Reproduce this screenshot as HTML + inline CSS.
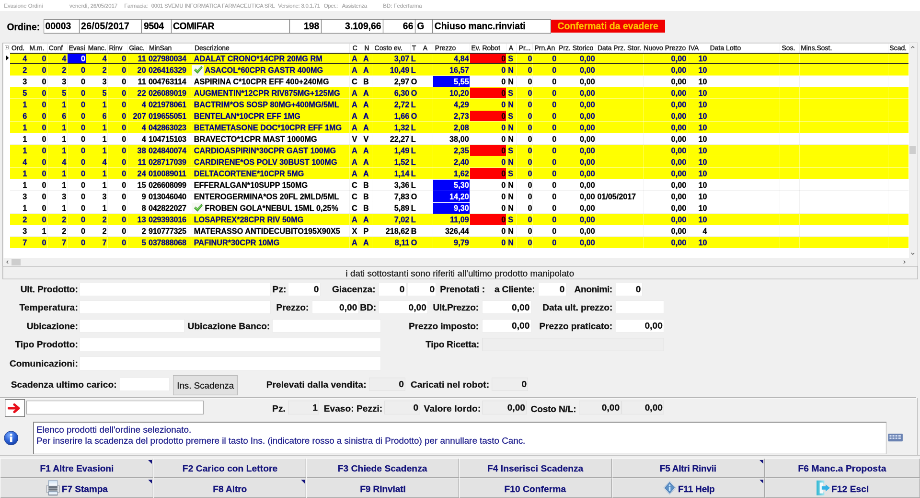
<!DOCTYPE html>
<html lang="it"><head><meta charset="utf-8"><title>Evasione Ordini</title>
<style>
html,body{margin:0;padding:0;width:920px;height:498px;overflow:hidden;background:#f0f0f0;}
#w{position:absolute;left:0;top:0;width:1920px;height:1040px;transform-origin:0 0;transform:scale(0.479167,0.479167);
 font-family:"Liberation Sans",sans-serif;background:#f0f0f0;overflow:hidden;will-change:transform;}
.b{position:absolute;display:block;box-sizing:border-box;}
.t{position:absolute;white-space:nowrap;display:block;-webkit-text-stroke:0.3px;}
</style></head><body><div id="w">
<div class="b " style="left:0.00px;top:0.00px;width:1920.00px;height:22.96px;background:#ffffff;"></div>
<span class="t" style="top:4.82px;height:14.79px;line-height:14.79px;font-size:11.37px;color:#a4a4a4;letter-spacing:0.07px;left:8.35px;-webkit-text-stroke:0.35px #b4b4b4;">Evasione Ordini</span>
<span class="t" style="top:4.82px;height:14.79px;line-height:14.79px;font-size:11.37px;color:#a4a4a4;letter-spacing:-0.05px;left:145.04px;-webkit-text-stroke:0.35px #b4b4b4;">venerdì, 26/05/2017</span>
<span class="t" style="top:4.82px;height:14.79px;line-height:14.79px;font-size:11.37px;color:#a4a4a4;letter-spacing:-0.17px;left:259.30px;-webkit-text-stroke:0.35px #b4b4b4;">Farmacia:</span>
<span class="t" style="top:4.82px;height:14.79px;line-height:14.79px;font-size:11.37px;color:#a4a4a4;letter-spacing:-0.20px;left:315.65px;-webkit-text-stroke:0.35px #b4b4b4;">0001 SVEMU INFORMATICA FARMACEUTICA SRL</span>
<span class="t" style="top:4.82px;height:14.79px;line-height:14.79px;font-size:11.37px;color:#a4a4a4;letter-spacing:-0.22px;left:580.17px;-webkit-text-stroke:0.35px #b4b4b4;">Versione: 3.0.1.71</span>
<span class="t" style="top:4.82px;height:14.79px;line-height:14.79px;font-size:11.37px;color:#a4a4a4;letter-spacing:-0.29px;left:675.65px;-webkit-text-stroke:0.35px #b4b4b4;">Oper.:</span>
<span class="t" style="top:4.82px;height:14.79px;line-height:14.79px;font-size:11.37px;color:#a4a4a4;letter-spacing:-0.28px;left:713.74px;-webkit-text-stroke:0.35px #b4b4b4;">Assistenza</span>
<span class="t" style="top:4.82px;height:14.79px;line-height:14.79px;font-size:11.37px;color:#a4a4a4;letter-spacing:0.03px;left:799.30px;-webkit-text-stroke:0.35px #b4b4b4;">BD: Federfarma</span>
<span class="t" style="top:43.84px;height:25.23px;line-height:25.23px;font-size:19.41px;color:#000;font-weight:bold;letter-spacing:-0.05px;left:14.40px;">Ordine:</span>
<div class="b " style="left:90.78px;top:40.49px;width:75.13px;height:29.63px;background:#fff;box-shadow:inset 0 0 0 1.2px #7f7f7f;"></div>
<div class="b " style="left:164.87px;top:40.49px;width:130.96px;height:29.63px;background:#fff;box-shadow:inset 0 0 0 1.2px #7f7f7f;"></div>
<div class="b " style="left:294.78px;top:40.49px;width:63.65px;height:29.63px;background:#fff;box-shadow:inset 0 0 0 1.2px #7f7f7f;"></div>
<div class="b " style="left:357.39px;top:40.49px;width:247.30px;height:29.63px;background:#fff;box-shadow:inset 0 0 0 1.2px #7f7f7f;"></div>
<div class="b " style="left:603.65px;top:40.49px;width:67.83px;height:29.63px;background:#fff;box-shadow:inset 0 0 0 1.2px #7f7f7f;"></div>
<div class="b " style="left:670.43px;top:40.49px;width:129.91px;height:29.63px;background:#fff;box-shadow:inset 0 0 0 1.2px #7f7f7f;"></div>
<div class="b " style="left:799.30px;top:40.49px;width:67.83px;height:29.63px;background:#fff;box-shadow:inset 0 0 0 1.2px #7f7f7f;"></div>
<div class="b " style="left:866.09px;top:40.49px;width:36.52px;height:29.63px;background:#fff;box-shadow:inset 0 0 0 1.2px #7f7f7f;"></div>
<div class="b " style="left:901.57px;top:40.49px;width:248.35px;height:29.63px;background:#fff;box-shadow:inset 0 0 0 1.2px #7f7f7f;"></div>
<span class="t" style="top:41.65px;height:25.23px;line-height:25.23px;font-size:19.41px;color:#000;font-weight:bold;letter-spacing:-0.05px;left:94.43px;">00003</span>
<span class="t" style="top:41.65px;height:25.23px;line-height:25.23px;font-size:19.41px;color:#000;font-weight:bold;letter-spacing:0.41px;left:169.04px;">26/05/2017</span>
<span class="t" style="top:41.65px;height:25.23px;line-height:25.23px;font-size:19.41px;color:#000;font-weight:bold;letter-spacing:-0.36px;left:300.00px;">9504</span>
<span class="t" style="top:41.65px;height:25.23px;line-height:25.23px;font-size:19.41px;color:#000;font-weight:bold;letter-spacing:-0.49px;left:361.04px;">COMIFAR</span>
<span class="t" style="top:41.65px;height:25.23px;line-height:25.23px;font-size:19.41px;color:#000;font-weight:bold;right:1253.74px;text-align:right;">198</span>
<span class="t" style="top:41.65px;height:25.23px;line-height:25.23px;font-size:19.41px;color:#000;font-weight:bold;right:1124.35px;text-align:right;">3.109,66</span>
<span class="t" style="top:41.65px;height:25.23px;line-height:25.23px;font-size:19.41px;color:#000;font-weight:bold;right:1057.57px;text-align:right;">66</span>
<span class="t" style="top:41.65px;height:25.23px;line-height:25.23px;font-size:19.41px;color:#000;font-weight:bold;left:870.26px;">G</span>
<span class="t" style="top:41.65px;height:25.23px;line-height:25.23px;font-size:19.41px;color:#000;font-weight:bold;letter-spacing:-0.05px;left:906.78px;">Chiuso manc.rinviati</span>
<div class="b " style="left:1150.43px;top:40.70px;width:237.39px;height:27.34px;background:#f00000;"></div>
<span class="t" style="top:41.75px;height:25.23px;line-height:25.23px;font-size:19.41px;color:#ffc000;font-weight:bold;letter-spacing:0.05px;left:1163.48px;">Confermati da evadere</span>
<div class="b " style="left:5.22px;top:88.70px;width:1910.61px;height:467.27px;background:#fff;box-shadow:inset 0 0 0 1.6px #b4b4b4;"></div>
<div class="b " style="left:20.87px;top:109.77px;width:1875.13px;height:24.00px;background:#ffff00;"></div>
<div class="b " style="left:57.91px;top:109.77px;width:1.04px;height:24.00px;background:rgba(255,255,255,0.4);"></div>
<div class="b " style="left:98.61px;top:109.77px;width:1.04px;height:24.00px;background:rgba(255,255,255,0.4);"></div>
<div class="b " style="left:139.93px;top:109.77px;width:1.04px;height:24.00px;background:rgba(255,255,255,0.4);"></div>
<div class="b " style="left:179.37px;top:109.77px;width:1.04px;height:24.00px;background:rgba(255,255,255,0.4);"></div>
<div class="b " style="left:223.83px;top:109.77px;width:1.04px;height:24.00px;background:rgba(255,255,255,0.4);"></div>
<div class="b " style="left:264.52px;top:109.77px;width:1.04px;height:24.00px;background:rgba(255,255,255,0.4);"></div>
<div class="b " style="left:306.26px;top:109.77px;width:1.04px;height:24.00px;background:rgba(255,255,255,0.4);"></div>
<div class="b " style="left:400.17px;top:109.77px;width:1.04px;height:24.00px;background:rgba(255,255,255,0.4);"></div>
<div class="b " style="left:728.87px;top:109.77px;width:1.04px;height:24.00px;background:rgba(255,255,255,0.4);"></div>
<div class="b " style="left:752.87px;top:109.77px;width:1.04px;height:24.00px;background:rgba(255,255,255,0.4);"></div>
<div class="b " style="left:775.83px;top:109.77px;width:1.04px;height:24.00px;background:rgba(255,255,255,0.4);"></div>
<div class="b " style="left:856.17px;top:109.77px;width:1.04px;height:24.00px;background:rgba(255,255,255,0.4);"></div>
<div class="b " style="left:876.00px;top:109.77px;width:1.04px;height:24.00px;background:rgba(255,255,255,0.4);"></div>
<div class="b " style="left:903.13px;top:109.77px;width:1.04px;height:24.00px;background:rgba(255,255,255,0.4);"></div>
<div class="b " style="left:980.35px;top:109.77px;width:1.04px;height:24.00px;background:rgba(255,255,255,0.4);"></div>
<div class="b " style="left:1056.10px;top:109.77px;width:1.04px;height:24.00px;background:rgba(255,255,255,0.4);"></div>
<div class="b " style="left:1077.39px;top:109.77px;width:1.04px;height:24.00px;background:rgba(255,255,255,0.4);"></div>
<div class="b " style="left:1110.78px;top:109.77px;width:1.04px;height:24.00px;background:rgba(255,255,255,0.4);"></div>
<div class="b " style="left:1161.91px;top:109.77px;width:1.04px;height:24.00px;background:rgba(255,255,255,0.4);"></div>
<div class="b " style="left:1243.30px;top:109.77px;width:1.04px;height:24.00px;background:rgba(255,255,255,0.4);"></div>
<div class="b " style="left:1342.43px;top:109.77px;width:1.04px;height:24.00px;background:rgba(255,255,255,0.4);"></div>
<div class="b " style="left:1435.30px;top:109.77px;width:1.04px;height:24.00px;background:rgba(255,255,255,0.4);"></div>
<div class="b " style="left:1477.04px;top:109.77px;width:1.04px;height:24.00px;background:rgba(255,255,255,0.4);"></div>
<div class="b " style="left:1627.30px;top:109.77px;width:1.04px;height:24.00px;background:rgba(255,255,255,0.4);"></div>
<div class="b " style="left:1667.58px;top:109.77px;width:1.04px;height:24.00px;background:rgba(255,255,255,0.4);"></div>
<div class="b " style="left:1852.70px;top:109.77px;width:1.04px;height:24.00px;background:rgba(255,255,255,0.4);"></div>
<div class="b " style="left:20.87px;top:133.25px;width:1875.13px;height:1.04px;background:rgba(255,255,255,0.45);"></div>
<div class="b " style="left:140.87px;top:111.03px;width:39.03px;height:22.33px;background:#0000fa;"></div>
<div class="b " style="left:981.29px;top:111.03px;width:75.13px;height:22.33px;background:#ff0000;"></div>
<span class="t" style="top:111.92px;height:21.16px;line-height:21.16px;font-size:16.28px;color:#000088;font-weight:bold;right:1863.65px;text-align:right;">4</span>
<span class="t" style="top:111.92px;height:21.16px;line-height:21.16px;font-size:16.28px;color:#000088;font-weight:bold;right:1823.37px;text-align:right;">0</span>
<span class="t" style="top:111.92px;height:21.16px;line-height:21.16px;font-size:16.28px;color:#000088;font-weight:bold;right:1781.84px;text-align:right;">4</span>
<span class="t" style="top:111.92px;height:21.16px;line-height:21.16px;font-size:16.28px;color:#fff;font-weight:bold;right:1741.98px;text-align:right;">0</span>
<span class="t" style="top:111.92px;height:21.16px;line-height:21.16px;font-size:16.28px;color:#000088;font-weight:bold;right:1697.53px;text-align:right;">4</span>
<span class="t" style="top:111.92px;height:21.16px;line-height:21.16px;font-size:16.28px;color:#000088;font-weight:bold;right:1656.63px;text-align:right;">0</span>
<span class="t" style="top:111.92px;height:21.16px;line-height:21.16px;font-size:16.28px;color:#000088;font-weight:bold;right:1615.30px;text-align:right;">11</span>
<span class="t" style="top:111.92px;height:21.16px;line-height:21.16px;font-size:16.28px;color:#000088;font-weight:bold;letter-spacing:-0.29px;left:309.91px;">027980034</span>
<span class="t" style="top:111.92px;height:21.16px;line-height:21.16px;font-size:16.28px;color:#000088;font-weight:bold;left:404.66px;">ADALAT CRONO*14CPR 20MG RM</span>
<span class="t" style="top:111.92px;height:21.16px;line-height:21.16px;font-size:16.28px;color:#000088;font-weight:bold;left:322.43px;width:834.78px;text-align:center;">A</span>
<span class="t" style="top:111.92px;height:21.16px;line-height:21.16px;font-size:16.28px;color:#000088;font-weight:bold;left:346.43px;width:834.78px;text-align:center;">A</span>
<span class="t" style="top:111.92px;height:21.16px;line-height:21.16px;font-size:16.28px;color:#000088;font-weight:bold;right:1065.60px;text-align:right;">3,07</span>
<span class="t" style="top:111.92px;height:21.16px;line-height:21.16px;font-size:16.28px;color:#000088;font-weight:bold;left:857.74px;">L</span>
<span class="t" style="top:111.92px;height:21.16px;line-height:21.16px;font-size:16.28px;color:#000088;font-weight:bold;right:941.22px;text-align:right;">4,84</span>
<span class="t" style="top:111.92px;height:21.16px;line-height:21.16px;font-size:16.28px;color:#200000;font-weight:bold;right:864.83px;text-align:right;">0</span>
<span class="t" style="top:111.92px;height:21.16px;line-height:21.16px;font-size:16.28px;color:#000088;font-weight:bold;left:1060.17px;">S</span>
<span class="t" style="top:111.92px;height:21.16px;line-height:21.16px;font-size:16.28px;color:#000088;font-weight:bold;left:688.70px;width:834.78px;text-align:center;">0</span>
<span class="t" style="top:111.92px;height:21.16px;line-height:21.16px;font-size:16.28px;color:#000088;font-weight:bold;left:739.41px;width:834.78px;text-align:center;">0</span>
<span class="t" style="top:111.92px;height:21.16px;line-height:21.16px;font-size:16.28px;color:#000088;font-weight:bold;right:678.26px;text-align:right;">0,00</span>
<span class="t" style="top:111.92px;height:21.16px;line-height:21.16px;font-size:16.28px;color:#000088;font-weight:bold;right:487.72px;text-align:right;">0,00</span>
<span class="t" style="top:111.92px;height:21.16px;line-height:21.16px;font-size:16.28px;color:#000088;font-weight:bold;right:444.52px;text-align:right;">10</span>
<div class="b " style="left:20.87px;top:133.77px;width:1875.13px;height:24.00px;background:#ffff00;"></div>
<div class="b " style="left:57.91px;top:133.77px;width:1.04px;height:24.00px;background:rgba(255,255,255,0.4);"></div>
<div class="b " style="left:98.61px;top:133.77px;width:1.04px;height:24.00px;background:rgba(255,255,255,0.4);"></div>
<div class="b " style="left:139.93px;top:133.77px;width:1.04px;height:24.00px;background:rgba(255,255,255,0.4);"></div>
<div class="b " style="left:179.37px;top:133.77px;width:1.04px;height:24.00px;background:rgba(255,255,255,0.4);"></div>
<div class="b " style="left:223.83px;top:133.77px;width:1.04px;height:24.00px;background:rgba(255,255,255,0.4);"></div>
<div class="b " style="left:264.52px;top:133.77px;width:1.04px;height:24.00px;background:rgba(255,255,255,0.4);"></div>
<div class="b " style="left:306.26px;top:133.77px;width:1.04px;height:24.00px;background:rgba(255,255,255,0.4);"></div>
<div class="b " style="left:400.17px;top:133.77px;width:1.04px;height:24.00px;background:rgba(255,255,255,0.4);"></div>
<div class="b " style="left:728.87px;top:133.77px;width:1.04px;height:24.00px;background:rgba(255,255,255,0.4);"></div>
<div class="b " style="left:752.87px;top:133.77px;width:1.04px;height:24.00px;background:rgba(255,255,255,0.4);"></div>
<div class="b " style="left:775.83px;top:133.77px;width:1.04px;height:24.00px;background:rgba(255,255,255,0.4);"></div>
<div class="b " style="left:856.17px;top:133.77px;width:1.04px;height:24.00px;background:rgba(255,255,255,0.4);"></div>
<div class="b " style="left:876.00px;top:133.77px;width:1.04px;height:24.00px;background:rgba(255,255,255,0.4);"></div>
<div class="b " style="left:903.13px;top:133.77px;width:1.04px;height:24.00px;background:rgba(255,255,255,0.4);"></div>
<div class="b " style="left:980.35px;top:133.77px;width:1.04px;height:24.00px;background:rgba(255,255,255,0.4);"></div>
<div class="b " style="left:1056.10px;top:133.77px;width:1.04px;height:24.00px;background:rgba(255,255,255,0.4);"></div>
<div class="b " style="left:1077.39px;top:133.77px;width:1.04px;height:24.00px;background:rgba(255,255,255,0.4);"></div>
<div class="b " style="left:1110.78px;top:133.77px;width:1.04px;height:24.00px;background:rgba(255,255,255,0.4);"></div>
<div class="b " style="left:1161.91px;top:133.77px;width:1.04px;height:24.00px;background:rgba(255,255,255,0.4);"></div>
<div class="b " style="left:1243.30px;top:133.77px;width:1.04px;height:24.00px;background:rgba(255,255,255,0.4);"></div>
<div class="b " style="left:1342.43px;top:133.77px;width:1.04px;height:24.00px;background:rgba(255,255,255,0.4);"></div>
<div class="b " style="left:1435.30px;top:133.77px;width:1.04px;height:24.00px;background:rgba(255,255,255,0.4);"></div>
<div class="b " style="left:1477.04px;top:133.77px;width:1.04px;height:24.00px;background:rgba(255,255,255,0.4);"></div>
<div class="b " style="left:1627.30px;top:133.77px;width:1.04px;height:24.00px;background:rgba(255,255,255,0.4);"></div>
<div class="b " style="left:1667.58px;top:133.77px;width:1.04px;height:24.00px;background:rgba(255,255,255,0.4);"></div>
<div class="b " style="left:1852.70px;top:133.77px;width:1.04px;height:24.00px;background:rgba(255,255,255,0.4);"></div>
<div class="b " style="left:20.87px;top:157.25px;width:1875.13px;height:1.04px;background:rgba(255,255,255,0.45);"></div>
<span class="t" style="top:135.92px;height:21.16px;line-height:21.16px;font-size:16.28px;color:#000088;font-weight:bold;right:1863.65px;text-align:right;">2</span>
<span class="t" style="top:135.92px;height:21.16px;line-height:21.16px;font-size:16.28px;color:#000088;font-weight:bold;right:1823.37px;text-align:right;">0</span>
<span class="t" style="top:135.92px;height:21.16px;line-height:21.16px;font-size:16.28px;color:#000088;font-weight:bold;right:1781.84px;text-align:right;">2</span>
<span class="t" style="top:135.92px;height:21.16px;line-height:21.16px;font-size:16.28px;color:#000088;font-weight:bold;right:1741.98px;text-align:right;">0</span>
<span class="t" style="top:135.92px;height:21.16px;line-height:21.16px;font-size:16.28px;color:#000088;font-weight:bold;right:1697.53px;text-align:right;">2</span>
<span class="t" style="top:135.92px;height:21.16px;line-height:21.16px;font-size:16.28px;color:#000088;font-weight:bold;right:1656.63px;text-align:right;">0</span>
<span class="t" style="top:135.92px;height:21.16px;line-height:21.16px;font-size:16.28px;color:#000088;font-weight:bold;right:1615.30px;text-align:right;">20</span>
<span class="t" style="top:135.92px;height:21.16px;line-height:21.16px;font-size:16.28px;color:#000088;font-weight:bold;letter-spacing:-0.29px;left:309.91px;">026416329</span>
<div class="b " style="left:401.11px;top:134.82px;width:23.79px;height:22.75px;background:#f7f9f3;"></div>
<svg class="b" style="left:402.57px;top:137.43px;width:21.29px;height:17.53px" viewBox="0 0 22 20"><path d="M1.5 11 L5 7.5 L9 11.5 L18.5 1.5 L21 4.5 L9.5 18.5 Z" fill="#3fae2a" stroke="#2a7d1c" stroke-width="1"/><path d="M3.5 11 L5 9.5 L9 13.5 L18.5 3.5" fill="none" stroke="#b8ee9a" stroke-width="1.3"/></svg>
<span class="t" style="top:135.92px;height:21.16px;line-height:21.16px;font-size:16.28px;color:#000088;font-weight:bold;left:427.41px;">ASACOL*60CPR GASTR 400MG</span>
<span class="t" style="top:135.92px;height:21.16px;line-height:21.16px;font-size:16.28px;color:#000088;font-weight:bold;left:322.43px;width:834.78px;text-align:center;">A</span>
<span class="t" style="top:135.92px;height:21.16px;line-height:21.16px;font-size:16.28px;color:#000088;font-weight:bold;left:346.43px;width:834.78px;text-align:center;">A</span>
<span class="t" style="top:135.92px;height:21.16px;line-height:21.16px;font-size:16.28px;color:#000088;font-weight:bold;right:1065.60px;text-align:right;">10,49</span>
<span class="t" style="top:135.92px;height:21.16px;line-height:21.16px;font-size:16.28px;color:#000088;font-weight:bold;left:857.74px;">L</span>
<span class="t" style="top:135.92px;height:21.16px;line-height:21.16px;font-size:16.28px;color:#000088;font-weight:bold;right:941.22px;text-align:right;">16,57</span>
<span class="t" style="top:135.92px;height:21.16px;line-height:21.16px;font-size:16.28px;color:#000088;font-weight:bold;right:864.83px;text-align:right;">0</span>
<span class="t" style="top:135.92px;height:21.16px;line-height:21.16px;font-size:16.28px;color:#000088;font-weight:bold;left:1060.17px;">N</span>
<span class="t" style="top:135.92px;height:21.16px;line-height:21.16px;font-size:16.28px;color:#000088;font-weight:bold;left:688.70px;width:834.78px;text-align:center;">0</span>
<span class="t" style="top:135.92px;height:21.16px;line-height:21.16px;font-size:16.28px;color:#000088;font-weight:bold;left:739.41px;width:834.78px;text-align:center;">0</span>
<span class="t" style="top:135.92px;height:21.16px;line-height:21.16px;font-size:16.28px;color:#000088;font-weight:bold;right:678.26px;text-align:right;">0,00</span>
<span class="t" style="top:135.92px;height:21.16px;line-height:21.16px;font-size:16.28px;color:#000088;font-weight:bold;right:487.72px;text-align:right;">0,00</span>
<span class="t" style="top:135.92px;height:21.16px;line-height:21.16px;font-size:16.28px;color:#000088;font-weight:bold;right:444.52px;text-align:right;">10</span>
<div class="b " style="left:57.91px;top:157.77px;width:1.04px;height:24.00px;background:rgba(0,0,0,0.05);"></div>
<div class="b " style="left:98.61px;top:157.77px;width:1.04px;height:24.00px;background:rgba(0,0,0,0.05);"></div>
<div class="b " style="left:139.93px;top:157.77px;width:1.04px;height:24.00px;background:rgba(0,0,0,0.05);"></div>
<div class="b " style="left:179.37px;top:157.77px;width:1.04px;height:24.00px;background:rgba(0,0,0,0.05);"></div>
<div class="b " style="left:223.83px;top:157.77px;width:1.04px;height:24.00px;background:rgba(0,0,0,0.05);"></div>
<div class="b " style="left:264.52px;top:157.77px;width:1.04px;height:24.00px;background:rgba(0,0,0,0.05);"></div>
<div class="b " style="left:306.26px;top:157.77px;width:1.04px;height:24.00px;background:rgba(0,0,0,0.05);"></div>
<div class="b " style="left:400.17px;top:157.77px;width:1.04px;height:24.00px;background:rgba(0,0,0,0.05);"></div>
<div class="b " style="left:728.87px;top:157.77px;width:1.04px;height:24.00px;background:rgba(0,0,0,0.05);"></div>
<div class="b " style="left:752.87px;top:157.77px;width:1.04px;height:24.00px;background:rgba(0,0,0,0.05);"></div>
<div class="b " style="left:775.83px;top:157.77px;width:1.04px;height:24.00px;background:rgba(0,0,0,0.05);"></div>
<div class="b " style="left:856.17px;top:157.77px;width:1.04px;height:24.00px;background:rgba(0,0,0,0.05);"></div>
<div class="b " style="left:876.00px;top:157.77px;width:1.04px;height:24.00px;background:rgba(0,0,0,0.05);"></div>
<div class="b " style="left:903.13px;top:157.77px;width:1.04px;height:24.00px;background:rgba(0,0,0,0.05);"></div>
<div class="b " style="left:980.35px;top:157.77px;width:1.04px;height:24.00px;background:rgba(0,0,0,0.05);"></div>
<div class="b " style="left:1056.10px;top:157.77px;width:1.04px;height:24.00px;background:rgba(0,0,0,0.05);"></div>
<div class="b " style="left:1077.39px;top:157.77px;width:1.04px;height:24.00px;background:rgba(0,0,0,0.05);"></div>
<div class="b " style="left:1110.78px;top:157.77px;width:1.04px;height:24.00px;background:rgba(0,0,0,0.05);"></div>
<div class="b " style="left:1161.91px;top:157.77px;width:1.04px;height:24.00px;background:rgba(0,0,0,0.05);"></div>
<div class="b " style="left:1243.30px;top:157.77px;width:1.04px;height:24.00px;background:rgba(0,0,0,0.05);"></div>
<div class="b " style="left:1342.43px;top:157.77px;width:1.04px;height:24.00px;background:rgba(0,0,0,0.05);"></div>
<div class="b " style="left:1435.30px;top:157.77px;width:1.04px;height:24.00px;background:rgba(0,0,0,0.05);"></div>
<div class="b " style="left:1477.04px;top:157.77px;width:1.04px;height:24.00px;background:rgba(0,0,0,0.05);"></div>
<div class="b " style="left:1627.30px;top:157.77px;width:1.04px;height:24.00px;background:rgba(0,0,0,0.05);"></div>
<div class="b " style="left:1667.58px;top:157.77px;width:1.04px;height:24.00px;background:rgba(0,0,0,0.05);"></div>
<div class="b " style="left:1852.70px;top:157.77px;width:1.04px;height:24.00px;background:rgba(0,0,0,0.05);"></div>
<div class="b " style="left:20.87px;top:181.25px;width:1875.13px;height:1.04px;background:rgba(0,0,0,0.05);"></div>
<div class="b " style="left:903.86px;top:159.23px;width:76.59px;height:22.33px;background:#0000fa;"></div>
<span class="t" style="top:159.92px;height:21.16px;line-height:21.16px;font-size:16.28px;color:#000;font-weight:bold;right:1863.65px;text-align:right;">3</span>
<span class="t" style="top:159.92px;height:21.16px;line-height:21.16px;font-size:16.28px;color:#000;font-weight:bold;right:1823.37px;text-align:right;">0</span>
<span class="t" style="top:159.92px;height:21.16px;line-height:21.16px;font-size:16.28px;color:#000;font-weight:bold;right:1781.84px;text-align:right;">3</span>
<span class="t" style="top:159.92px;height:21.16px;line-height:21.16px;font-size:16.28px;color:#000;font-weight:bold;right:1741.98px;text-align:right;">0</span>
<span class="t" style="top:159.92px;height:21.16px;line-height:21.16px;font-size:16.28px;color:#000;font-weight:bold;right:1697.53px;text-align:right;">3</span>
<span class="t" style="top:159.92px;height:21.16px;line-height:21.16px;font-size:16.28px;color:#000;font-weight:bold;right:1656.63px;text-align:right;">0</span>
<span class="t" style="top:159.92px;height:21.16px;line-height:21.16px;font-size:16.28px;color:#000;font-weight:bold;right:1615.30px;text-align:right;">11</span>
<span class="t" style="top:159.92px;height:21.16px;line-height:21.16px;font-size:16.28px;color:#000;font-weight:bold;letter-spacing:-0.19px;left:309.91px;">004763114</span>
<span class="t" style="top:159.92px;height:21.16px;line-height:21.16px;font-size:16.28px;color:#000;font-weight:bold;left:404.66px;">ASPIRINA C*10CPR EFF 400+240MG</span>
<span class="t" style="top:159.92px;height:21.16px;line-height:21.16px;font-size:16.28px;color:#000;font-weight:bold;left:322.43px;width:834.78px;text-align:center;">C</span>
<span class="t" style="top:159.92px;height:21.16px;line-height:21.16px;font-size:16.28px;color:#000;font-weight:bold;left:346.43px;width:834.78px;text-align:center;">B</span>
<span class="t" style="top:159.92px;height:21.16px;line-height:21.16px;font-size:16.28px;color:#000;font-weight:bold;right:1065.60px;text-align:right;">2,97</span>
<span class="t" style="top:159.92px;height:21.16px;line-height:21.16px;font-size:16.28px;color:#000;font-weight:bold;left:857.74px;">O</span>
<span class="t" style="top:159.92px;height:21.16px;line-height:21.16px;font-size:16.28px;color:#fff;font-weight:bold;right:941.22px;text-align:right;">5,55</span>
<span class="t" style="top:159.92px;height:21.16px;line-height:21.16px;font-size:16.28px;color:#000;font-weight:bold;right:864.83px;text-align:right;">0</span>
<span class="t" style="top:159.92px;height:21.16px;line-height:21.16px;font-size:16.28px;color:#000;font-weight:bold;left:1060.17px;">N</span>
<span class="t" style="top:159.92px;height:21.16px;line-height:21.16px;font-size:16.28px;color:#000;font-weight:bold;left:688.70px;width:834.78px;text-align:center;">0</span>
<span class="t" style="top:159.92px;height:21.16px;line-height:21.16px;font-size:16.28px;color:#000;font-weight:bold;left:739.41px;width:834.78px;text-align:center;">0</span>
<span class="t" style="top:159.92px;height:21.16px;line-height:21.16px;font-size:16.28px;color:#000;font-weight:bold;right:678.26px;text-align:right;">0,00</span>
<span class="t" style="top:159.92px;height:21.16px;line-height:21.16px;font-size:16.28px;color:#000;font-weight:bold;right:487.72px;text-align:right;">0,00</span>
<span class="t" style="top:159.92px;height:21.16px;line-height:21.16px;font-size:16.28px;color:#000;font-weight:bold;right:444.52px;text-align:right;">10</span>
<div class="b " style="left:20.87px;top:181.77px;width:1875.13px;height:24.00px;background:#ffff00;"></div>
<div class="b " style="left:57.91px;top:181.77px;width:1.04px;height:24.00px;background:rgba(255,255,255,0.4);"></div>
<div class="b " style="left:98.61px;top:181.77px;width:1.04px;height:24.00px;background:rgba(255,255,255,0.4);"></div>
<div class="b " style="left:139.93px;top:181.77px;width:1.04px;height:24.00px;background:rgba(255,255,255,0.4);"></div>
<div class="b " style="left:179.37px;top:181.77px;width:1.04px;height:24.00px;background:rgba(255,255,255,0.4);"></div>
<div class="b " style="left:223.83px;top:181.77px;width:1.04px;height:24.00px;background:rgba(255,255,255,0.4);"></div>
<div class="b " style="left:264.52px;top:181.77px;width:1.04px;height:24.00px;background:rgba(255,255,255,0.4);"></div>
<div class="b " style="left:306.26px;top:181.77px;width:1.04px;height:24.00px;background:rgba(255,255,255,0.4);"></div>
<div class="b " style="left:400.17px;top:181.77px;width:1.04px;height:24.00px;background:rgba(255,255,255,0.4);"></div>
<div class="b " style="left:728.87px;top:181.77px;width:1.04px;height:24.00px;background:rgba(255,255,255,0.4);"></div>
<div class="b " style="left:752.87px;top:181.77px;width:1.04px;height:24.00px;background:rgba(255,255,255,0.4);"></div>
<div class="b " style="left:775.83px;top:181.77px;width:1.04px;height:24.00px;background:rgba(255,255,255,0.4);"></div>
<div class="b " style="left:856.17px;top:181.77px;width:1.04px;height:24.00px;background:rgba(255,255,255,0.4);"></div>
<div class="b " style="left:876.00px;top:181.77px;width:1.04px;height:24.00px;background:rgba(255,255,255,0.4);"></div>
<div class="b " style="left:903.13px;top:181.77px;width:1.04px;height:24.00px;background:rgba(255,255,255,0.4);"></div>
<div class="b " style="left:980.35px;top:181.77px;width:1.04px;height:24.00px;background:rgba(255,255,255,0.4);"></div>
<div class="b " style="left:1056.10px;top:181.77px;width:1.04px;height:24.00px;background:rgba(255,255,255,0.4);"></div>
<div class="b " style="left:1077.39px;top:181.77px;width:1.04px;height:24.00px;background:rgba(255,255,255,0.4);"></div>
<div class="b " style="left:1110.78px;top:181.77px;width:1.04px;height:24.00px;background:rgba(255,255,255,0.4);"></div>
<div class="b " style="left:1161.91px;top:181.77px;width:1.04px;height:24.00px;background:rgba(255,255,255,0.4);"></div>
<div class="b " style="left:1243.30px;top:181.77px;width:1.04px;height:24.00px;background:rgba(255,255,255,0.4);"></div>
<div class="b " style="left:1342.43px;top:181.77px;width:1.04px;height:24.00px;background:rgba(255,255,255,0.4);"></div>
<div class="b " style="left:1435.30px;top:181.77px;width:1.04px;height:24.00px;background:rgba(255,255,255,0.4);"></div>
<div class="b " style="left:1477.04px;top:181.77px;width:1.04px;height:24.00px;background:rgba(255,255,255,0.4);"></div>
<div class="b " style="left:1627.30px;top:181.77px;width:1.04px;height:24.00px;background:rgba(255,255,255,0.4);"></div>
<div class="b " style="left:1667.58px;top:181.77px;width:1.04px;height:24.00px;background:rgba(255,255,255,0.4);"></div>
<div class="b " style="left:1852.70px;top:181.77px;width:1.04px;height:24.00px;background:rgba(255,255,255,0.4);"></div>
<div class="b " style="left:20.87px;top:205.25px;width:1875.13px;height:1.04px;background:rgba(255,255,255,0.45);"></div>
<div class="b " style="left:981.29px;top:183.03px;width:75.13px;height:22.33px;background:#ff0000;"></div>
<span class="t" style="top:183.92px;height:21.16px;line-height:21.16px;font-size:16.28px;color:#000088;font-weight:bold;right:1863.65px;text-align:right;">5</span>
<span class="t" style="top:183.92px;height:21.16px;line-height:21.16px;font-size:16.28px;color:#000088;font-weight:bold;right:1823.37px;text-align:right;">0</span>
<span class="t" style="top:183.92px;height:21.16px;line-height:21.16px;font-size:16.28px;color:#000088;font-weight:bold;right:1781.84px;text-align:right;">5</span>
<span class="t" style="top:183.92px;height:21.16px;line-height:21.16px;font-size:16.28px;color:#000088;font-weight:bold;right:1741.98px;text-align:right;">0</span>
<span class="t" style="top:183.92px;height:21.16px;line-height:21.16px;font-size:16.28px;color:#000088;font-weight:bold;right:1697.53px;text-align:right;">5</span>
<span class="t" style="top:183.92px;height:21.16px;line-height:21.16px;font-size:16.28px;color:#000088;font-weight:bold;right:1656.63px;text-align:right;">0</span>
<span class="t" style="top:183.92px;height:21.16px;line-height:21.16px;font-size:16.28px;color:#000088;font-weight:bold;right:1615.30px;text-align:right;">22</span>
<span class="t" style="top:183.92px;height:21.16px;line-height:21.16px;font-size:16.28px;color:#000088;font-weight:bold;letter-spacing:-0.29px;left:309.91px;">026089019</span>
<span class="t" style="top:183.92px;height:21.16px;line-height:21.16px;font-size:16.28px;color:#000088;font-weight:bold;left:404.66px;">AUGMENTIN*12CPR RIV875MG+125MG</span>
<span class="t" style="top:183.92px;height:21.16px;line-height:21.16px;font-size:16.28px;color:#000088;font-weight:bold;left:322.43px;width:834.78px;text-align:center;">A</span>
<span class="t" style="top:183.92px;height:21.16px;line-height:21.16px;font-size:16.28px;color:#000088;font-weight:bold;left:346.43px;width:834.78px;text-align:center;">A</span>
<span class="t" style="top:183.92px;height:21.16px;line-height:21.16px;font-size:16.28px;color:#000088;font-weight:bold;right:1065.60px;text-align:right;">6,30</span>
<span class="t" style="top:183.92px;height:21.16px;line-height:21.16px;font-size:16.28px;color:#000088;font-weight:bold;left:857.74px;">O</span>
<span class="t" style="top:183.92px;height:21.16px;line-height:21.16px;font-size:16.28px;color:#000088;font-weight:bold;right:941.22px;text-align:right;">10,20</span>
<span class="t" style="top:183.92px;height:21.16px;line-height:21.16px;font-size:16.28px;color:#200000;font-weight:bold;right:864.83px;text-align:right;">0</span>
<span class="t" style="top:183.92px;height:21.16px;line-height:21.16px;font-size:16.28px;color:#000088;font-weight:bold;left:1060.17px;">S</span>
<span class="t" style="top:183.92px;height:21.16px;line-height:21.16px;font-size:16.28px;color:#000088;font-weight:bold;left:688.70px;width:834.78px;text-align:center;">0</span>
<span class="t" style="top:183.92px;height:21.16px;line-height:21.16px;font-size:16.28px;color:#000088;font-weight:bold;left:739.41px;width:834.78px;text-align:center;">0</span>
<span class="t" style="top:183.92px;height:21.16px;line-height:21.16px;font-size:16.28px;color:#000088;font-weight:bold;right:678.26px;text-align:right;">0,00</span>
<span class="t" style="top:183.92px;height:21.16px;line-height:21.16px;font-size:16.28px;color:#000088;font-weight:bold;right:487.72px;text-align:right;">0,00</span>
<span class="t" style="top:183.92px;height:21.16px;line-height:21.16px;font-size:16.28px;color:#000088;font-weight:bold;right:444.52px;text-align:right;">10</span>
<div class="b " style="left:20.87px;top:205.77px;width:1875.13px;height:24.00px;background:#ffff00;"></div>
<div class="b " style="left:57.91px;top:205.77px;width:1.04px;height:24.00px;background:rgba(255,255,255,0.4);"></div>
<div class="b " style="left:98.61px;top:205.77px;width:1.04px;height:24.00px;background:rgba(255,255,255,0.4);"></div>
<div class="b " style="left:139.93px;top:205.77px;width:1.04px;height:24.00px;background:rgba(255,255,255,0.4);"></div>
<div class="b " style="left:179.37px;top:205.77px;width:1.04px;height:24.00px;background:rgba(255,255,255,0.4);"></div>
<div class="b " style="left:223.83px;top:205.77px;width:1.04px;height:24.00px;background:rgba(255,255,255,0.4);"></div>
<div class="b " style="left:264.52px;top:205.77px;width:1.04px;height:24.00px;background:rgba(255,255,255,0.4);"></div>
<div class="b " style="left:306.26px;top:205.77px;width:1.04px;height:24.00px;background:rgba(255,255,255,0.4);"></div>
<div class="b " style="left:400.17px;top:205.77px;width:1.04px;height:24.00px;background:rgba(255,255,255,0.4);"></div>
<div class="b " style="left:728.87px;top:205.77px;width:1.04px;height:24.00px;background:rgba(255,255,255,0.4);"></div>
<div class="b " style="left:752.87px;top:205.77px;width:1.04px;height:24.00px;background:rgba(255,255,255,0.4);"></div>
<div class="b " style="left:775.83px;top:205.77px;width:1.04px;height:24.00px;background:rgba(255,255,255,0.4);"></div>
<div class="b " style="left:856.17px;top:205.77px;width:1.04px;height:24.00px;background:rgba(255,255,255,0.4);"></div>
<div class="b " style="left:876.00px;top:205.77px;width:1.04px;height:24.00px;background:rgba(255,255,255,0.4);"></div>
<div class="b " style="left:903.13px;top:205.77px;width:1.04px;height:24.00px;background:rgba(255,255,255,0.4);"></div>
<div class="b " style="left:980.35px;top:205.77px;width:1.04px;height:24.00px;background:rgba(255,255,255,0.4);"></div>
<div class="b " style="left:1056.10px;top:205.77px;width:1.04px;height:24.00px;background:rgba(255,255,255,0.4);"></div>
<div class="b " style="left:1077.39px;top:205.77px;width:1.04px;height:24.00px;background:rgba(255,255,255,0.4);"></div>
<div class="b " style="left:1110.78px;top:205.77px;width:1.04px;height:24.00px;background:rgba(255,255,255,0.4);"></div>
<div class="b " style="left:1161.91px;top:205.77px;width:1.04px;height:24.00px;background:rgba(255,255,255,0.4);"></div>
<div class="b " style="left:1243.30px;top:205.77px;width:1.04px;height:24.00px;background:rgba(255,255,255,0.4);"></div>
<div class="b " style="left:1342.43px;top:205.77px;width:1.04px;height:24.00px;background:rgba(255,255,255,0.4);"></div>
<div class="b " style="left:1435.30px;top:205.77px;width:1.04px;height:24.00px;background:rgba(255,255,255,0.4);"></div>
<div class="b " style="left:1477.04px;top:205.77px;width:1.04px;height:24.00px;background:rgba(255,255,255,0.4);"></div>
<div class="b " style="left:1627.30px;top:205.77px;width:1.04px;height:24.00px;background:rgba(255,255,255,0.4);"></div>
<div class="b " style="left:1667.58px;top:205.77px;width:1.04px;height:24.00px;background:rgba(255,255,255,0.4);"></div>
<div class="b " style="left:1852.70px;top:205.77px;width:1.04px;height:24.00px;background:rgba(255,255,255,0.4);"></div>
<div class="b " style="left:20.87px;top:229.25px;width:1875.13px;height:1.04px;background:rgba(255,255,255,0.45);"></div>
<span class="t" style="top:207.92px;height:21.16px;line-height:21.16px;font-size:16.28px;color:#000088;font-weight:bold;right:1863.65px;text-align:right;">1</span>
<span class="t" style="top:207.92px;height:21.16px;line-height:21.16px;font-size:16.28px;color:#000088;font-weight:bold;right:1823.37px;text-align:right;">0</span>
<span class="t" style="top:207.92px;height:21.16px;line-height:21.16px;font-size:16.28px;color:#000088;font-weight:bold;right:1781.84px;text-align:right;">1</span>
<span class="t" style="top:207.92px;height:21.16px;line-height:21.16px;font-size:16.28px;color:#000088;font-weight:bold;right:1741.98px;text-align:right;">0</span>
<span class="t" style="top:207.92px;height:21.16px;line-height:21.16px;font-size:16.28px;color:#000088;font-weight:bold;right:1697.53px;text-align:right;">1</span>
<span class="t" style="top:207.92px;height:21.16px;line-height:21.16px;font-size:16.28px;color:#000088;font-weight:bold;right:1656.63px;text-align:right;">0</span>
<span class="t" style="top:207.92px;height:21.16px;line-height:21.16px;font-size:16.28px;color:#000088;font-weight:bold;right:1615.30px;text-align:right;">4</span>
<span class="t" style="top:207.92px;height:21.16px;line-height:21.16px;font-size:16.28px;color:#000088;font-weight:bold;letter-spacing:-0.29px;left:309.91px;">021978061</span>
<span class="t" style="top:207.92px;height:21.16px;line-height:21.16px;font-size:16.28px;color:#000088;font-weight:bold;left:404.66px;">BACTRIM*OS SOSP 80MG+400MG/5ML</span>
<span class="t" style="top:207.92px;height:21.16px;line-height:21.16px;font-size:16.28px;color:#000088;font-weight:bold;left:322.43px;width:834.78px;text-align:center;">A</span>
<span class="t" style="top:207.92px;height:21.16px;line-height:21.16px;font-size:16.28px;color:#000088;font-weight:bold;left:346.43px;width:834.78px;text-align:center;">A</span>
<span class="t" style="top:207.92px;height:21.16px;line-height:21.16px;font-size:16.28px;color:#000088;font-weight:bold;right:1065.60px;text-align:right;">2,72</span>
<span class="t" style="top:207.92px;height:21.16px;line-height:21.16px;font-size:16.28px;color:#000088;font-weight:bold;left:857.74px;">L</span>
<span class="t" style="top:207.92px;height:21.16px;line-height:21.16px;font-size:16.28px;color:#000088;font-weight:bold;right:941.22px;text-align:right;">4,29</span>
<span class="t" style="top:207.92px;height:21.16px;line-height:21.16px;font-size:16.28px;color:#000088;font-weight:bold;right:864.83px;text-align:right;">0</span>
<span class="t" style="top:207.92px;height:21.16px;line-height:21.16px;font-size:16.28px;color:#000088;font-weight:bold;left:1060.17px;">N</span>
<span class="t" style="top:207.92px;height:21.16px;line-height:21.16px;font-size:16.28px;color:#000088;font-weight:bold;left:688.70px;width:834.78px;text-align:center;">0</span>
<span class="t" style="top:207.92px;height:21.16px;line-height:21.16px;font-size:16.28px;color:#000088;font-weight:bold;left:739.41px;width:834.78px;text-align:center;">0</span>
<span class="t" style="top:207.92px;height:21.16px;line-height:21.16px;font-size:16.28px;color:#000088;font-weight:bold;right:678.26px;text-align:right;">0,00</span>
<span class="t" style="top:207.92px;height:21.16px;line-height:21.16px;font-size:16.28px;color:#000088;font-weight:bold;right:487.72px;text-align:right;">0,00</span>
<span class="t" style="top:207.92px;height:21.16px;line-height:21.16px;font-size:16.28px;color:#000088;font-weight:bold;right:444.52px;text-align:right;">10</span>
<div class="b " style="left:20.87px;top:229.77px;width:1875.13px;height:24.00px;background:#ffff00;"></div>
<div class="b " style="left:57.91px;top:229.77px;width:1.04px;height:24.00px;background:rgba(255,255,255,0.4);"></div>
<div class="b " style="left:98.61px;top:229.77px;width:1.04px;height:24.00px;background:rgba(255,255,255,0.4);"></div>
<div class="b " style="left:139.93px;top:229.77px;width:1.04px;height:24.00px;background:rgba(255,255,255,0.4);"></div>
<div class="b " style="left:179.37px;top:229.77px;width:1.04px;height:24.00px;background:rgba(255,255,255,0.4);"></div>
<div class="b " style="left:223.83px;top:229.77px;width:1.04px;height:24.00px;background:rgba(255,255,255,0.4);"></div>
<div class="b " style="left:264.52px;top:229.77px;width:1.04px;height:24.00px;background:rgba(255,255,255,0.4);"></div>
<div class="b " style="left:306.26px;top:229.77px;width:1.04px;height:24.00px;background:rgba(255,255,255,0.4);"></div>
<div class="b " style="left:400.17px;top:229.77px;width:1.04px;height:24.00px;background:rgba(255,255,255,0.4);"></div>
<div class="b " style="left:728.87px;top:229.77px;width:1.04px;height:24.00px;background:rgba(255,255,255,0.4);"></div>
<div class="b " style="left:752.87px;top:229.77px;width:1.04px;height:24.00px;background:rgba(255,255,255,0.4);"></div>
<div class="b " style="left:775.83px;top:229.77px;width:1.04px;height:24.00px;background:rgba(255,255,255,0.4);"></div>
<div class="b " style="left:856.17px;top:229.77px;width:1.04px;height:24.00px;background:rgba(255,255,255,0.4);"></div>
<div class="b " style="left:876.00px;top:229.77px;width:1.04px;height:24.00px;background:rgba(255,255,255,0.4);"></div>
<div class="b " style="left:903.13px;top:229.77px;width:1.04px;height:24.00px;background:rgba(255,255,255,0.4);"></div>
<div class="b " style="left:980.35px;top:229.77px;width:1.04px;height:24.00px;background:rgba(255,255,255,0.4);"></div>
<div class="b " style="left:1056.10px;top:229.77px;width:1.04px;height:24.00px;background:rgba(255,255,255,0.4);"></div>
<div class="b " style="left:1077.39px;top:229.77px;width:1.04px;height:24.00px;background:rgba(255,255,255,0.4);"></div>
<div class="b " style="left:1110.78px;top:229.77px;width:1.04px;height:24.00px;background:rgba(255,255,255,0.4);"></div>
<div class="b " style="left:1161.91px;top:229.77px;width:1.04px;height:24.00px;background:rgba(255,255,255,0.4);"></div>
<div class="b " style="left:1243.30px;top:229.77px;width:1.04px;height:24.00px;background:rgba(255,255,255,0.4);"></div>
<div class="b " style="left:1342.43px;top:229.77px;width:1.04px;height:24.00px;background:rgba(255,255,255,0.4);"></div>
<div class="b " style="left:1435.30px;top:229.77px;width:1.04px;height:24.00px;background:rgba(255,255,255,0.4);"></div>
<div class="b " style="left:1477.04px;top:229.77px;width:1.04px;height:24.00px;background:rgba(255,255,255,0.4);"></div>
<div class="b " style="left:1627.30px;top:229.77px;width:1.04px;height:24.00px;background:rgba(255,255,255,0.4);"></div>
<div class="b " style="left:1667.58px;top:229.77px;width:1.04px;height:24.00px;background:rgba(255,255,255,0.4);"></div>
<div class="b " style="left:1852.70px;top:229.77px;width:1.04px;height:24.00px;background:rgba(255,255,255,0.4);"></div>
<div class="b " style="left:20.87px;top:253.25px;width:1875.13px;height:1.04px;background:rgba(255,255,255,0.45);"></div>
<div class="b " style="left:981.29px;top:231.03px;width:75.13px;height:22.33px;background:#ff0000;"></div>
<span class="t" style="top:231.92px;height:21.16px;line-height:21.16px;font-size:16.28px;color:#000088;font-weight:bold;right:1863.65px;text-align:right;">6</span>
<span class="t" style="top:231.92px;height:21.16px;line-height:21.16px;font-size:16.28px;color:#000088;font-weight:bold;right:1823.37px;text-align:right;">0</span>
<span class="t" style="top:231.92px;height:21.16px;line-height:21.16px;font-size:16.28px;color:#000088;font-weight:bold;right:1781.84px;text-align:right;">6</span>
<span class="t" style="top:231.92px;height:21.16px;line-height:21.16px;font-size:16.28px;color:#000088;font-weight:bold;right:1741.98px;text-align:right;">0</span>
<span class="t" style="top:231.92px;height:21.16px;line-height:21.16px;font-size:16.28px;color:#000088;font-weight:bold;right:1697.53px;text-align:right;">6</span>
<span class="t" style="top:231.92px;height:21.16px;line-height:21.16px;font-size:16.28px;color:#000088;font-weight:bold;right:1656.63px;text-align:right;">0</span>
<span class="t" style="top:231.92px;height:21.16px;line-height:21.16px;font-size:16.28px;color:#000088;font-weight:bold;right:1615.30px;text-align:right;">207</span>
<span class="t" style="top:231.92px;height:21.16px;line-height:21.16px;font-size:16.28px;color:#000088;font-weight:bold;letter-spacing:-0.29px;left:309.91px;">019655051</span>
<span class="t" style="top:231.92px;height:21.16px;line-height:21.16px;font-size:16.28px;color:#000088;font-weight:bold;left:404.66px;">BENTELAN*10CPR EFF 1MG</span>
<span class="t" style="top:231.92px;height:21.16px;line-height:21.16px;font-size:16.28px;color:#000088;font-weight:bold;left:322.43px;width:834.78px;text-align:center;">A</span>
<span class="t" style="top:231.92px;height:21.16px;line-height:21.16px;font-size:16.28px;color:#000088;font-weight:bold;left:346.43px;width:834.78px;text-align:center;">A</span>
<span class="t" style="top:231.92px;height:21.16px;line-height:21.16px;font-size:16.28px;color:#000088;font-weight:bold;right:1065.60px;text-align:right;">1,66</span>
<span class="t" style="top:231.92px;height:21.16px;line-height:21.16px;font-size:16.28px;color:#000088;font-weight:bold;left:857.74px;">O</span>
<span class="t" style="top:231.92px;height:21.16px;line-height:21.16px;font-size:16.28px;color:#000088;font-weight:bold;right:941.22px;text-align:right;">2,73</span>
<span class="t" style="top:231.92px;height:21.16px;line-height:21.16px;font-size:16.28px;color:#200000;font-weight:bold;right:864.83px;text-align:right;">0</span>
<span class="t" style="top:231.92px;height:21.16px;line-height:21.16px;font-size:16.28px;color:#000088;font-weight:bold;left:1060.17px;">S</span>
<span class="t" style="top:231.92px;height:21.16px;line-height:21.16px;font-size:16.28px;color:#000088;font-weight:bold;left:688.70px;width:834.78px;text-align:center;">0</span>
<span class="t" style="top:231.92px;height:21.16px;line-height:21.16px;font-size:16.28px;color:#000088;font-weight:bold;left:739.41px;width:834.78px;text-align:center;">0</span>
<span class="t" style="top:231.92px;height:21.16px;line-height:21.16px;font-size:16.28px;color:#000088;font-weight:bold;right:678.26px;text-align:right;">0,00</span>
<span class="t" style="top:231.92px;height:21.16px;line-height:21.16px;font-size:16.28px;color:#000088;font-weight:bold;right:487.72px;text-align:right;">0,00</span>
<span class="t" style="top:231.92px;height:21.16px;line-height:21.16px;font-size:16.28px;color:#000088;font-weight:bold;right:444.52px;text-align:right;">10</span>
<div class="b " style="left:20.87px;top:253.77px;width:1875.13px;height:24.00px;background:#ffff00;"></div>
<div class="b " style="left:57.91px;top:253.77px;width:1.04px;height:24.00px;background:rgba(255,255,255,0.4);"></div>
<div class="b " style="left:98.61px;top:253.77px;width:1.04px;height:24.00px;background:rgba(255,255,255,0.4);"></div>
<div class="b " style="left:139.93px;top:253.77px;width:1.04px;height:24.00px;background:rgba(255,255,255,0.4);"></div>
<div class="b " style="left:179.37px;top:253.77px;width:1.04px;height:24.00px;background:rgba(255,255,255,0.4);"></div>
<div class="b " style="left:223.83px;top:253.77px;width:1.04px;height:24.00px;background:rgba(255,255,255,0.4);"></div>
<div class="b " style="left:264.52px;top:253.77px;width:1.04px;height:24.00px;background:rgba(255,255,255,0.4);"></div>
<div class="b " style="left:306.26px;top:253.77px;width:1.04px;height:24.00px;background:rgba(255,255,255,0.4);"></div>
<div class="b " style="left:400.17px;top:253.77px;width:1.04px;height:24.00px;background:rgba(255,255,255,0.4);"></div>
<div class="b " style="left:728.87px;top:253.77px;width:1.04px;height:24.00px;background:rgba(255,255,255,0.4);"></div>
<div class="b " style="left:752.87px;top:253.77px;width:1.04px;height:24.00px;background:rgba(255,255,255,0.4);"></div>
<div class="b " style="left:775.83px;top:253.77px;width:1.04px;height:24.00px;background:rgba(255,255,255,0.4);"></div>
<div class="b " style="left:856.17px;top:253.77px;width:1.04px;height:24.00px;background:rgba(255,255,255,0.4);"></div>
<div class="b " style="left:876.00px;top:253.77px;width:1.04px;height:24.00px;background:rgba(255,255,255,0.4);"></div>
<div class="b " style="left:903.13px;top:253.77px;width:1.04px;height:24.00px;background:rgba(255,255,255,0.4);"></div>
<div class="b " style="left:980.35px;top:253.77px;width:1.04px;height:24.00px;background:rgba(255,255,255,0.4);"></div>
<div class="b " style="left:1056.10px;top:253.77px;width:1.04px;height:24.00px;background:rgba(255,255,255,0.4);"></div>
<div class="b " style="left:1077.39px;top:253.77px;width:1.04px;height:24.00px;background:rgba(255,255,255,0.4);"></div>
<div class="b " style="left:1110.78px;top:253.77px;width:1.04px;height:24.00px;background:rgba(255,255,255,0.4);"></div>
<div class="b " style="left:1161.91px;top:253.77px;width:1.04px;height:24.00px;background:rgba(255,255,255,0.4);"></div>
<div class="b " style="left:1243.30px;top:253.77px;width:1.04px;height:24.00px;background:rgba(255,255,255,0.4);"></div>
<div class="b " style="left:1342.43px;top:253.77px;width:1.04px;height:24.00px;background:rgba(255,255,255,0.4);"></div>
<div class="b " style="left:1435.30px;top:253.77px;width:1.04px;height:24.00px;background:rgba(255,255,255,0.4);"></div>
<div class="b " style="left:1477.04px;top:253.77px;width:1.04px;height:24.00px;background:rgba(255,255,255,0.4);"></div>
<div class="b " style="left:1627.30px;top:253.77px;width:1.04px;height:24.00px;background:rgba(255,255,255,0.4);"></div>
<div class="b " style="left:1667.58px;top:253.77px;width:1.04px;height:24.00px;background:rgba(255,255,255,0.4);"></div>
<div class="b " style="left:1852.70px;top:253.77px;width:1.04px;height:24.00px;background:rgba(255,255,255,0.4);"></div>
<div class="b " style="left:20.87px;top:277.25px;width:1875.13px;height:1.04px;background:rgba(255,255,255,0.45);"></div>
<span class="t" style="top:255.92px;height:21.16px;line-height:21.16px;font-size:16.28px;color:#000088;font-weight:bold;right:1863.65px;text-align:right;">1</span>
<span class="t" style="top:255.92px;height:21.16px;line-height:21.16px;font-size:16.28px;color:#000088;font-weight:bold;right:1823.37px;text-align:right;">0</span>
<span class="t" style="top:255.92px;height:21.16px;line-height:21.16px;font-size:16.28px;color:#000088;font-weight:bold;right:1781.84px;text-align:right;">1</span>
<span class="t" style="top:255.92px;height:21.16px;line-height:21.16px;font-size:16.28px;color:#000088;font-weight:bold;right:1741.98px;text-align:right;">0</span>
<span class="t" style="top:255.92px;height:21.16px;line-height:21.16px;font-size:16.28px;color:#000088;font-weight:bold;right:1697.53px;text-align:right;">1</span>
<span class="t" style="top:255.92px;height:21.16px;line-height:21.16px;font-size:16.28px;color:#000088;font-weight:bold;right:1656.63px;text-align:right;">0</span>
<span class="t" style="top:255.92px;height:21.16px;line-height:21.16px;font-size:16.28px;color:#000088;font-weight:bold;right:1615.30px;text-align:right;">4</span>
<span class="t" style="top:255.92px;height:21.16px;line-height:21.16px;font-size:16.28px;color:#000088;font-weight:bold;letter-spacing:-0.29px;left:309.91px;">042863023</span>
<span class="t" style="top:255.92px;height:21.16px;line-height:21.16px;font-size:16.28px;color:#000088;font-weight:bold;left:404.66px;">BETAMETASONE DOC*10CPR EFF 1MG</span>
<span class="t" style="top:255.92px;height:21.16px;line-height:21.16px;font-size:16.28px;color:#000088;font-weight:bold;left:322.43px;width:834.78px;text-align:center;">A</span>
<span class="t" style="top:255.92px;height:21.16px;line-height:21.16px;font-size:16.28px;color:#000088;font-weight:bold;left:346.43px;width:834.78px;text-align:center;">A</span>
<span class="t" style="top:255.92px;height:21.16px;line-height:21.16px;font-size:16.28px;color:#000088;font-weight:bold;right:1065.60px;text-align:right;">1,32</span>
<span class="t" style="top:255.92px;height:21.16px;line-height:21.16px;font-size:16.28px;color:#000088;font-weight:bold;left:857.74px;">L</span>
<span class="t" style="top:255.92px;height:21.16px;line-height:21.16px;font-size:16.28px;color:#000088;font-weight:bold;right:941.22px;text-align:right;">2,08</span>
<span class="t" style="top:255.92px;height:21.16px;line-height:21.16px;font-size:16.28px;color:#000088;font-weight:bold;right:864.83px;text-align:right;">0</span>
<span class="t" style="top:255.92px;height:21.16px;line-height:21.16px;font-size:16.28px;color:#000088;font-weight:bold;left:1060.17px;">N</span>
<span class="t" style="top:255.92px;height:21.16px;line-height:21.16px;font-size:16.28px;color:#000088;font-weight:bold;left:688.70px;width:834.78px;text-align:center;">0</span>
<span class="t" style="top:255.92px;height:21.16px;line-height:21.16px;font-size:16.28px;color:#000088;font-weight:bold;left:739.41px;width:834.78px;text-align:center;">0</span>
<span class="t" style="top:255.92px;height:21.16px;line-height:21.16px;font-size:16.28px;color:#000088;font-weight:bold;right:678.26px;text-align:right;">0,00</span>
<span class="t" style="top:255.92px;height:21.16px;line-height:21.16px;font-size:16.28px;color:#000088;font-weight:bold;right:487.72px;text-align:right;">0,00</span>
<span class="t" style="top:255.92px;height:21.16px;line-height:21.16px;font-size:16.28px;color:#000088;font-weight:bold;right:444.52px;text-align:right;">10</span>
<div class="b " style="left:57.91px;top:277.77px;width:1.04px;height:24.00px;background:rgba(0,0,0,0.05);"></div>
<div class="b " style="left:98.61px;top:277.77px;width:1.04px;height:24.00px;background:rgba(0,0,0,0.05);"></div>
<div class="b " style="left:139.93px;top:277.77px;width:1.04px;height:24.00px;background:rgba(0,0,0,0.05);"></div>
<div class="b " style="left:179.37px;top:277.77px;width:1.04px;height:24.00px;background:rgba(0,0,0,0.05);"></div>
<div class="b " style="left:223.83px;top:277.77px;width:1.04px;height:24.00px;background:rgba(0,0,0,0.05);"></div>
<div class="b " style="left:264.52px;top:277.77px;width:1.04px;height:24.00px;background:rgba(0,0,0,0.05);"></div>
<div class="b " style="left:306.26px;top:277.77px;width:1.04px;height:24.00px;background:rgba(0,0,0,0.05);"></div>
<div class="b " style="left:400.17px;top:277.77px;width:1.04px;height:24.00px;background:rgba(0,0,0,0.05);"></div>
<div class="b " style="left:728.87px;top:277.77px;width:1.04px;height:24.00px;background:rgba(0,0,0,0.05);"></div>
<div class="b " style="left:752.87px;top:277.77px;width:1.04px;height:24.00px;background:rgba(0,0,0,0.05);"></div>
<div class="b " style="left:775.83px;top:277.77px;width:1.04px;height:24.00px;background:rgba(0,0,0,0.05);"></div>
<div class="b " style="left:856.17px;top:277.77px;width:1.04px;height:24.00px;background:rgba(0,0,0,0.05);"></div>
<div class="b " style="left:876.00px;top:277.77px;width:1.04px;height:24.00px;background:rgba(0,0,0,0.05);"></div>
<div class="b " style="left:903.13px;top:277.77px;width:1.04px;height:24.00px;background:rgba(0,0,0,0.05);"></div>
<div class="b " style="left:980.35px;top:277.77px;width:1.04px;height:24.00px;background:rgba(0,0,0,0.05);"></div>
<div class="b " style="left:1056.10px;top:277.77px;width:1.04px;height:24.00px;background:rgba(0,0,0,0.05);"></div>
<div class="b " style="left:1077.39px;top:277.77px;width:1.04px;height:24.00px;background:rgba(0,0,0,0.05);"></div>
<div class="b " style="left:1110.78px;top:277.77px;width:1.04px;height:24.00px;background:rgba(0,0,0,0.05);"></div>
<div class="b " style="left:1161.91px;top:277.77px;width:1.04px;height:24.00px;background:rgba(0,0,0,0.05);"></div>
<div class="b " style="left:1243.30px;top:277.77px;width:1.04px;height:24.00px;background:rgba(0,0,0,0.05);"></div>
<div class="b " style="left:1342.43px;top:277.77px;width:1.04px;height:24.00px;background:rgba(0,0,0,0.05);"></div>
<div class="b " style="left:1435.30px;top:277.77px;width:1.04px;height:24.00px;background:rgba(0,0,0,0.05);"></div>
<div class="b " style="left:1477.04px;top:277.77px;width:1.04px;height:24.00px;background:rgba(0,0,0,0.05);"></div>
<div class="b " style="left:1627.30px;top:277.77px;width:1.04px;height:24.00px;background:rgba(0,0,0,0.05);"></div>
<div class="b " style="left:1667.58px;top:277.77px;width:1.04px;height:24.00px;background:rgba(0,0,0,0.05);"></div>
<div class="b " style="left:1852.70px;top:277.77px;width:1.04px;height:24.00px;background:rgba(0,0,0,0.05);"></div>
<div class="b " style="left:20.87px;top:301.25px;width:1875.13px;height:1.04px;background:rgba(0,0,0,0.05);"></div>
<span class="t" style="top:279.92px;height:21.16px;line-height:21.16px;font-size:16.28px;color:#000;font-weight:bold;right:1863.65px;text-align:right;">1</span>
<span class="t" style="top:279.92px;height:21.16px;line-height:21.16px;font-size:16.28px;color:#000;font-weight:bold;right:1823.37px;text-align:right;">0</span>
<span class="t" style="top:279.92px;height:21.16px;line-height:21.16px;font-size:16.28px;color:#000;font-weight:bold;right:1781.84px;text-align:right;">1</span>
<span class="t" style="top:279.92px;height:21.16px;line-height:21.16px;font-size:16.28px;color:#000;font-weight:bold;right:1741.98px;text-align:right;">0</span>
<span class="t" style="top:279.92px;height:21.16px;line-height:21.16px;font-size:16.28px;color:#000;font-weight:bold;right:1697.53px;text-align:right;">1</span>
<span class="t" style="top:279.92px;height:21.16px;line-height:21.16px;font-size:16.28px;color:#000;font-weight:bold;right:1656.63px;text-align:right;">0</span>
<span class="t" style="top:279.92px;height:21.16px;line-height:21.16px;font-size:16.28px;color:#000;font-weight:bold;right:1615.30px;text-align:right;">4</span>
<span class="t" style="top:279.92px;height:21.16px;line-height:21.16px;font-size:16.28px;color:#000;font-weight:bold;letter-spacing:-0.29px;left:309.91px;">104715103</span>
<span class="t" style="top:279.92px;height:21.16px;line-height:21.16px;font-size:16.28px;color:#000;font-weight:bold;left:404.66px;">BRAVECTO*1CPR MAST 1000MG</span>
<span class="t" style="top:279.92px;height:21.16px;line-height:21.16px;font-size:16.28px;color:#000;font-weight:bold;left:322.43px;width:834.78px;text-align:center;">V</span>
<span class="t" style="top:279.92px;height:21.16px;line-height:21.16px;font-size:16.28px;color:#000;font-weight:bold;left:346.43px;width:834.78px;text-align:center;">V</span>
<span class="t" style="top:279.92px;height:21.16px;line-height:21.16px;font-size:16.28px;color:#000;font-weight:bold;right:1065.60px;text-align:right;">22,27</span>
<span class="t" style="top:279.92px;height:21.16px;line-height:21.16px;font-size:16.28px;color:#000;font-weight:bold;left:857.74px;">L</span>
<span class="t" style="top:279.92px;height:21.16px;line-height:21.16px;font-size:16.28px;color:#000;font-weight:bold;right:941.22px;text-align:right;">38,00</span>
<span class="t" style="top:279.92px;height:21.16px;line-height:21.16px;font-size:16.28px;color:#000;font-weight:bold;right:864.83px;text-align:right;">0</span>
<span class="t" style="top:279.92px;height:21.16px;line-height:21.16px;font-size:16.28px;color:#000;font-weight:bold;left:1060.17px;">N</span>
<span class="t" style="top:279.92px;height:21.16px;line-height:21.16px;font-size:16.28px;color:#000;font-weight:bold;left:688.70px;width:834.78px;text-align:center;">0</span>
<span class="t" style="top:279.92px;height:21.16px;line-height:21.16px;font-size:16.28px;color:#000;font-weight:bold;left:739.41px;width:834.78px;text-align:center;">0</span>
<span class="t" style="top:279.92px;height:21.16px;line-height:21.16px;font-size:16.28px;color:#000;font-weight:bold;right:678.26px;text-align:right;">0,00</span>
<span class="t" style="top:279.92px;height:21.16px;line-height:21.16px;font-size:16.28px;color:#000;font-weight:bold;right:487.72px;text-align:right;">0,00</span>
<span class="t" style="top:279.92px;height:21.16px;line-height:21.16px;font-size:16.28px;color:#000;font-weight:bold;right:444.52px;text-align:right;">10</span>
<div class="b " style="left:20.87px;top:301.77px;width:1875.13px;height:24.00px;background:#ffff00;"></div>
<div class="b " style="left:57.91px;top:301.77px;width:1.04px;height:24.00px;background:rgba(255,255,255,0.4);"></div>
<div class="b " style="left:98.61px;top:301.77px;width:1.04px;height:24.00px;background:rgba(255,255,255,0.4);"></div>
<div class="b " style="left:139.93px;top:301.77px;width:1.04px;height:24.00px;background:rgba(255,255,255,0.4);"></div>
<div class="b " style="left:179.37px;top:301.77px;width:1.04px;height:24.00px;background:rgba(255,255,255,0.4);"></div>
<div class="b " style="left:223.83px;top:301.77px;width:1.04px;height:24.00px;background:rgba(255,255,255,0.4);"></div>
<div class="b " style="left:264.52px;top:301.77px;width:1.04px;height:24.00px;background:rgba(255,255,255,0.4);"></div>
<div class="b " style="left:306.26px;top:301.77px;width:1.04px;height:24.00px;background:rgba(255,255,255,0.4);"></div>
<div class="b " style="left:400.17px;top:301.77px;width:1.04px;height:24.00px;background:rgba(255,255,255,0.4);"></div>
<div class="b " style="left:728.87px;top:301.77px;width:1.04px;height:24.00px;background:rgba(255,255,255,0.4);"></div>
<div class="b " style="left:752.87px;top:301.77px;width:1.04px;height:24.00px;background:rgba(255,255,255,0.4);"></div>
<div class="b " style="left:775.83px;top:301.77px;width:1.04px;height:24.00px;background:rgba(255,255,255,0.4);"></div>
<div class="b " style="left:856.17px;top:301.77px;width:1.04px;height:24.00px;background:rgba(255,255,255,0.4);"></div>
<div class="b " style="left:876.00px;top:301.77px;width:1.04px;height:24.00px;background:rgba(255,255,255,0.4);"></div>
<div class="b " style="left:903.13px;top:301.77px;width:1.04px;height:24.00px;background:rgba(255,255,255,0.4);"></div>
<div class="b " style="left:980.35px;top:301.77px;width:1.04px;height:24.00px;background:rgba(255,255,255,0.4);"></div>
<div class="b " style="left:1056.10px;top:301.77px;width:1.04px;height:24.00px;background:rgba(255,255,255,0.4);"></div>
<div class="b " style="left:1077.39px;top:301.77px;width:1.04px;height:24.00px;background:rgba(255,255,255,0.4);"></div>
<div class="b " style="left:1110.78px;top:301.77px;width:1.04px;height:24.00px;background:rgba(255,255,255,0.4);"></div>
<div class="b " style="left:1161.91px;top:301.77px;width:1.04px;height:24.00px;background:rgba(255,255,255,0.4);"></div>
<div class="b " style="left:1243.30px;top:301.77px;width:1.04px;height:24.00px;background:rgba(255,255,255,0.4);"></div>
<div class="b " style="left:1342.43px;top:301.77px;width:1.04px;height:24.00px;background:rgba(255,255,255,0.4);"></div>
<div class="b " style="left:1435.30px;top:301.77px;width:1.04px;height:24.00px;background:rgba(255,255,255,0.4);"></div>
<div class="b " style="left:1477.04px;top:301.77px;width:1.04px;height:24.00px;background:rgba(255,255,255,0.4);"></div>
<div class="b " style="left:1627.30px;top:301.77px;width:1.04px;height:24.00px;background:rgba(255,255,255,0.4);"></div>
<div class="b " style="left:1667.58px;top:301.77px;width:1.04px;height:24.00px;background:rgba(255,255,255,0.4);"></div>
<div class="b " style="left:1852.70px;top:301.77px;width:1.04px;height:24.00px;background:rgba(255,255,255,0.4);"></div>
<div class="b " style="left:20.87px;top:325.25px;width:1875.13px;height:1.04px;background:rgba(255,255,255,0.45);"></div>
<div class="b " style="left:981.29px;top:303.03px;width:75.13px;height:22.33px;background:#ff0000;"></div>
<span class="t" style="top:303.92px;height:21.16px;line-height:21.16px;font-size:16.28px;color:#000088;font-weight:bold;right:1863.65px;text-align:right;">1</span>
<span class="t" style="top:303.92px;height:21.16px;line-height:21.16px;font-size:16.28px;color:#000088;font-weight:bold;right:1823.37px;text-align:right;">0</span>
<span class="t" style="top:303.92px;height:21.16px;line-height:21.16px;font-size:16.28px;color:#000088;font-weight:bold;right:1781.84px;text-align:right;">1</span>
<span class="t" style="top:303.92px;height:21.16px;line-height:21.16px;font-size:16.28px;color:#000088;font-weight:bold;right:1741.98px;text-align:right;">0</span>
<span class="t" style="top:303.92px;height:21.16px;line-height:21.16px;font-size:16.28px;color:#000088;font-weight:bold;right:1697.53px;text-align:right;">1</span>
<span class="t" style="top:303.92px;height:21.16px;line-height:21.16px;font-size:16.28px;color:#000088;font-weight:bold;right:1656.63px;text-align:right;">0</span>
<span class="t" style="top:303.92px;height:21.16px;line-height:21.16px;font-size:16.28px;color:#000088;font-weight:bold;right:1615.30px;text-align:right;">38</span>
<span class="t" style="top:303.92px;height:21.16px;line-height:21.16px;font-size:16.28px;color:#000088;font-weight:bold;letter-spacing:-0.29px;left:309.91px;">024840074</span>
<span class="t" style="top:303.92px;height:21.16px;line-height:21.16px;font-size:16.28px;color:#000088;font-weight:bold;left:404.66px;">CARDIOASPIRIN*30CPR GAST 100MG</span>
<span class="t" style="top:303.92px;height:21.16px;line-height:21.16px;font-size:16.28px;color:#000088;font-weight:bold;left:322.43px;width:834.78px;text-align:center;">A</span>
<span class="t" style="top:303.92px;height:21.16px;line-height:21.16px;font-size:16.28px;color:#000088;font-weight:bold;left:346.43px;width:834.78px;text-align:center;">A</span>
<span class="t" style="top:303.92px;height:21.16px;line-height:21.16px;font-size:16.28px;color:#000088;font-weight:bold;right:1065.60px;text-align:right;">1,49</span>
<span class="t" style="top:303.92px;height:21.16px;line-height:21.16px;font-size:16.28px;color:#000088;font-weight:bold;left:857.74px;">L</span>
<span class="t" style="top:303.92px;height:21.16px;line-height:21.16px;font-size:16.28px;color:#000088;font-weight:bold;right:941.22px;text-align:right;">2,35</span>
<span class="t" style="top:303.92px;height:21.16px;line-height:21.16px;font-size:16.28px;color:#200000;font-weight:bold;right:864.83px;text-align:right;">0</span>
<span class="t" style="top:303.92px;height:21.16px;line-height:21.16px;font-size:16.28px;color:#000088;font-weight:bold;left:1060.17px;">S</span>
<span class="t" style="top:303.92px;height:21.16px;line-height:21.16px;font-size:16.28px;color:#000088;font-weight:bold;left:688.70px;width:834.78px;text-align:center;">0</span>
<span class="t" style="top:303.92px;height:21.16px;line-height:21.16px;font-size:16.28px;color:#000088;font-weight:bold;left:739.41px;width:834.78px;text-align:center;">0</span>
<span class="t" style="top:303.92px;height:21.16px;line-height:21.16px;font-size:16.28px;color:#000088;font-weight:bold;right:678.26px;text-align:right;">0,00</span>
<span class="t" style="top:303.92px;height:21.16px;line-height:21.16px;font-size:16.28px;color:#000088;font-weight:bold;right:487.72px;text-align:right;">0,00</span>
<span class="t" style="top:303.92px;height:21.16px;line-height:21.16px;font-size:16.28px;color:#000088;font-weight:bold;right:444.52px;text-align:right;">10</span>
<div class="b " style="left:20.87px;top:325.77px;width:1875.13px;height:24.00px;background:#ffff00;"></div>
<div class="b " style="left:57.91px;top:325.77px;width:1.04px;height:24.00px;background:rgba(255,255,255,0.4);"></div>
<div class="b " style="left:98.61px;top:325.77px;width:1.04px;height:24.00px;background:rgba(255,255,255,0.4);"></div>
<div class="b " style="left:139.93px;top:325.77px;width:1.04px;height:24.00px;background:rgba(255,255,255,0.4);"></div>
<div class="b " style="left:179.37px;top:325.77px;width:1.04px;height:24.00px;background:rgba(255,255,255,0.4);"></div>
<div class="b " style="left:223.83px;top:325.77px;width:1.04px;height:24.00px;background:rgba(255,255,255,0.4);"></div>
<div class="b " style="left:264.52px;top:325.77px;width:1.04px;height:24.00px;background:rgba(255,255,255,0.4);"></div>
<div class="b " style="left:306.26px;top:325.77px;width:1.04px;height:24.00px;background:rgba(255,255,255,0.4);"></div>
<div class="b " style="left:400.17px;top:325.77px;width:1.04px;height:24.00px;background:rgba(255,255,255,0.4);"></div>
<div class="b " style="left:728.87px;top:325.77px;width:1.04px;height:24.00px;background:rgba(255,255,255,0.4);"></div>
<div class="b " style="left:752.87px;top:325.77px;width:1.04px;height:24.00px;background:rgba(255,255,255,0.4);"></div>
<div class="b " style="left:775.83px;top:325.77px;width:1.04px;height:24.00px;background:rgba(255,255,255,0.4);"></div>
<div class="b " style="left:856.17px;top:325.77px;width:1.04px;height:24.00px;background:rgba(255,255,255,0.4);"></div>
<div class="b " style="left:876.00px;top:325.77px;width:1.04px;height:24.00px;background:rgba(255,255,255,0.4);"></div>
<div class="b " style="left:903.13px;top:325.77px;width:1.04px;height:24.00px;background:rgba(255,255,255,0.4);"></div>
<div class="b " style="left:980.35px;top:325.77px;width:1.04px;height:24.00px;background:rgba(255,255,255,0.4);"></div>
<div class="b " style="left:1056.10px;top:325.77px;width:1.04px;height:24.00px;background:rgba(255,255,255,0.4);"></div>
<div class="b " style="left:1077.39px;top:325.77px;width:1.04px;height:24.00px;background:rgba(255,255,255,0.4);"></div>
<div class="b " style="left:1110.78px;top:325.77px;width:1.04px;height:24.00px;background:rgba(255,255,255,0.4);"></div>
<div class="b " style="left:1161.91px;top:325.77px;width:1.04px;height:24.00px;background:rgba(255,255,255,0.4);"></div>
<div class="b " style="left:1243.30px;top:325.77px;width:1.04px;height:24.00px;background:rgba(255,255,255,0.4);"></div>
<div class="b " style="left:1342.43px;top:325.77px;width:1.04px;height:24.00px;background:rgba(255,255,255,0.4);"></div>
<div class="b " style="left:1435.30px;top:325.77px;width:1.04px;height:24.00px;background:rgba(255,255,255,0.4);"></div>
<div class="b " style="left:1477.04px;top:325.77px;width:1.04px;height:24.00px;background:rgba(255,255,255,0.4);"></div>
<div class="b " style="left:1627.30px;top:325.77px;width:1.04px;height:24.00px;background:rgba(255,255,255,0.4);"></div>
<div class="b " style="left:1667.58px;top:325.77px;width:1.04px;height:24.00px;background:rgba(255,255,255,0.4);"></div>
<div class="b " style="left:1852.70px;top:325.77px;width:1.04px;height:24.00px;background:rgba(255,255,255,0.4);"></div>
<div class="b " style="left:20.87px;top:349.25px;width:1875.13px;height:1.04px;background:rgba(255,255,255,0.45);"></div>
<span class="t" style="top:327.92px;height:21.16px;line-height:21.16px;font-size:16.28px;color:#000088;font-weight:bold;right:1863.65px;text-align:right;">4</span>
<span class="t" style="top:327.92px;height:21.16px;line-height:21.16px;font-size:16.28px;color:#000088;font-weight:bold;right:1823.37px;text-align:right;">0</span>
<span class="t" style="top:327.92px;height:21.16px;line-height:21.16px;font-size:16.28px;color:#000088;font-weight:bold;right:1781.84px;text-align:right;">4</span>
<span class="t" style="top:327.92px;height:21.16px;line-height:21.16px;font-size:16.28px;color:#000088;font-weight:bold;right:1741.98px;text-align:right;">0</span>
<span class="t" style="top:327.92px;height:21.16px;line-height:21.16px;font-size:16.28px;color:#000088;font-weight:bold;right:1697.53px;text-align:right;">4</span>
<span class="t" style="top:327.92px;height:21.16px;line-height:21.16px;font-size:16.28px;color:#000088;font-weight:bold;right:1656.63px;text-align:right;">0</span>
<span class="t" style="top:327.92px;height:21.16px;line-height:21.16px;font-size:16.28px;color:#000088;font-weight:bold;right:1615.30px;text-align:right;">11</span>
<span class="t" style="top:327.92px;height:21.16px;line-height:21.16px;font-size:16.28px;color:#000088;font-weight:bold;letter-spacing:-0.29px;left:309.91px;">028717039</span>
<span class="t" style="top:327.92px;height:21.16px;line-height:21.16px;font-size:16.28px;color:#000088;font-weight:bold;left:404.66px;">CARDIRENE*OS POLV 30BUST 100MG</span>
<span class="t" style="top:327.92px;height:21.16px;line-height:21.16px;font-size:16.28px;color:#000088;font-weight:bold;left:322.43px;width:834.78px;text-align:center;">A</span>
<span class="t" style="top:327.92px;height:21.16px;line-height:21.16px;font-size:16.28px;color:#000088;font-weight:bold;left:346.43px;width:834.78px;text-align:center;">A</span>
<span class="t" style="top:327.92px;height:21.16px;line-height:21.16px;font-size:16.28px;color:#000088;font-weight:bold;right:1065.60px;text-align:right;">1,52</span>
<span class="t" style="top:327.92px;height:21.16px;line-height:21.16px;font-size:16.28px;color:#000088;font-weight:bold;left:857.74px;">L</span>
<span class="t" style="top:327.92px;height:21.16px;line-height:21.16px;font-size:16.28px;color:#000088;font-weight:bold;right:941.22px;text-align:right;">2,40</span>
<span class="t" style="top:327.92px;height:21.16px;line-height:21.16px;font-size:16.28px;color:#000088;font-weight:bold;right:864.83px;text-align:right;">0</span>
<span class="t" style="top:327.92px;height:21.16px;line-height:21.16px;font-size:16.28px;color:#000088;font-weight:bold;left:1060.17px;">N</span>
<span class="t" style="top:327.92px;height:21.16px;line-height:21.16px;font-size:16.28px;color:#000088;font-weight:bold;left:688.70px;width:834.78px;text-align:center;">0</span>
<span class="t" style="top:327.92px;height:21.16px;line-height:21.16px;font-size:16.28px;color:#000088;font-weight:bold;left:739.41px;width:834.78px;text-align:center;">0</span>
<span class="t" style="top:327.92px;height:21.16px;line-height:21.16px;font-size:16.28px;color:#000088;font-weight:bold;right:678.26px;text-align:right;">0,00</span>
<span class="t" style="top:327.92px;height:21.16px;line-height:21.16px;font-size:16.28px;color:#000088;font-weight:bold;right:487.72px;text-align:right;">0,00</span>
<span class="t" style="top:327.92px;height:21.16px;line-height:21.16px;font-size:16.28px;color:#000088;font-weight:bold;right:444.52px;text-align:right;">10</span>
<div class="b " style="left:20.87px;top:349.77px;width:1875.13px;height:24.00px;background:#ffff00;"></div>
<div class="b " style="left:57.91px;top:349.77px;width:1.04px;height:24.00px;background:rgba(255,255,255,0.4);"></div>
<div class="b " style="left:98.61px;top:349.77px;width:1.04px;height:24.00px;background:rgba(255,255,255,0.4);"></div>
<div class="b " style="left:139.93px;top:349.77px;width:1.04px;height:24.00px;background:rgba(255,255,255,0.4);"></div>
<div class="b " style="left:179.37px;top:349.77px;width:1.04px;height:24.00px;background:rgba(255,255,255,0.4);"></div>
<div class="b " style="left:223.83px;top:349.77px;width:1.04px;height:24.00px;background:rgba(255,255,255,0.4);"></div>
<div class="b " style="left:264.52px;top:349.77px;width:1.04px;height:24.00px;background:rgba(255,255,255,0.4);"></div>
<div class="b " style="left:306.26px;top:349.77px;width:1.04px;height:24.00px;background:rgba(255,255,255,0.4);"></div>
<div class="b " style="left:400.17px;top:349.77px;width:1.04px;height:24.00px;background:rgba(255,255,255,0.4);"></div>
<div class="b " style="left:728.87px;top:349.77px;width:1.04px;height:24.00px;background:rgba(255,255,255,0.4);"></div>
<div class="b " style="left:752.87px;top:349.77px;width:1.04px;height:24.00px;background:rgba(255,255,255,0.4);"></div>
<div class="b " style="left:775.83px;top:349.77px;width:1.04px;height:24.00px;background:rgba(255,255,255,0.4);"></div>
<div class="b " style="left:856.17px;top:349.77px;width:1.04px;height:24.00px;background:rgba(255,255,255,0.4);"></div>
<div class="b " style="left:876.00px;top:349.77px;width:1.04px;height:24.00px;background:rgba(255,255,255,0.4);"></div>
<div class="b " style="left:903.13px;top:349.77px;width:1.04px;height:24.00px;background:rgba(255,255,255,0.4);"></div>
<div class="b " style="left:980.35px;top:349.77px;width:1.04px;height:24.00px;background:rgba(255,255,255,0.4);"></div>
<div class="b " style="left:1056.10px;top:349.77px;width:1.04px;height:24.00px;background:rgba(255,255,255,0.4);"></div>
<div class="b " style="left:1077.39px;top:349.77px;width:1.04px;height:24.00px;background:rgba(255,255,255,0.4);"></div>
<div class="b " style="left:1110.78px;top:349.77px;width:1.04px;height:24.00px;background:rgba(255,255,255,0.4);"></div>
<div class="b " style="left:1161.91px;top:349.77px;width:1.04px;height:24.00px;background:rgba(255,255,255,0.4);"></div>
<div class="b " style="left:1243.30px;top:349.77px;width:1.04px;height:24.00px;background:rgba(255,255,255,0.4);"></div>
<div class="b " style="left:1342.43px;top:349.77px;width:1.04px;height:24.00px;background:rgba(255,255,255,0.4);"></div>
<div class="b " style="left:1435.30px;top:349.77px;width:1.04px;height:24.00px;background:rgba(255,255,255,0.4);"></div>
<div class="b " style="left:1477.04px;top:349.77px;width:1.04px;height:24.00px;background:rgba(255,255,255,0.4);"></div>
<div class="b " style="left:1627.30px;top:349.77px;width:1.04px;height:24.00px;background:rgba(255,255,255,0.4);"></div>
<div class="b " style="left:1667.58px;top:349.77px;width:1.04px;height:24.00px;background:rgba(255,255,255,0.4);"></div>
<div class="b " style="left:1852.70px;top:349.77px;width:1.04px;height:24.00px;background:rgba(255,255,255,0.4);"></div>
<div class="b " style="left:20.87px;top:373.25px;width:1875.13px;height:1.04px;background:rgba(255,255,255,0.45);"></div>
<div class="b " style="left:981.29px;top:351.03px;width:75.13px;height:22.33px;background:#ff0000;"></div>
<span class="t" style="top:351.92px;height:21.16px;line-height:21.16px;font-size:16.28px;color:#000088;font-weight:bold;right:1863.65px;text-align:right;">1</span>
<span class="t" style="top:351.92px;height:21.16px;line-height:21.16px;font-size:16.28px;color:#000088;font-weight:bold;right:1823.37px;text-align:right;">0</span>
<span class="t" style="top:351.92px;height:21.16px;line-height:21.16px;font-size:16.28px;color:#000088;font-weight:bold;right:1781.84px;text-align:right;">1</span>
<span class="t" style="top:351.92px;height:21.16px;line-height:21.16px;font-size:16.28px;color:#000088;font-weight:bold;right:1741.98px;text-align:right;">0</span>
<span class="t" style="top:351.92px;height:21.16px;line-height:21.16px;font-size:16.28px;color:#000088;font-weight:bold;right:1697.53px;text-align:right;">1</span>
<span class="t" style="top:351.92px;height:21.16px;line-height:21.16px;font-size:16.28px;color:#000088;font-weight:bold;right:1656.63px;text-align:right;">0</span>
<span class="t" style="top:351.92px;height:21.16px;line-height:21.16px;font-size:16.28px;color:#000088;font-weight:bold;right:1615.30px;text-align:right;">24</span>
<span class="t" style="top:351.92px;height:21.16px;line-height:21.16px;font-size:16.28px;color:#000088;font-weight:bold;letter-spacing:-0.19px;left:309.91px;">010089011</span>
<span class="t" style="top:351.92px;height:21.16px;line-height:21.16px;font-size:16.28px;color:#000088;font-weight:bold;left:404.66px;">DELTACORTENE*10CPR 5MG</span>
<span class="t" style="top:351.92px;height:21.16px;line-height:21.16px;font-size:16.28px;color:#000088;font-weight:bold;left:322.43px;width:834.78px;text-align:center;">A</span>
<span class="t" style="top:351.92px;height:21.16px;line-height:21.16px;font-size:16.28px;color:#000088;font-weight:bold;left:346.43px;width:834.78px;text-align:center;">A</span>
<span class="t" style="top:351.92px;height:21.16px;line-height:21.16px;font-size:16.28px;color:#000088;font-weight:bold;right:1065.60px;text-align:right;">1,14</span>
<span class="t" style="top:351.92px;height:21.16px;line-height:21.16px;font-size:16.28px;color:#000088;font-weight:bold;left:857.74px;">L</span>
<span class="t" style="top:351.92px;height:21.16px;line-height:21.16px;font-size:16.28px;color:#000088;font-weight:bold;right:941.22px;text-align:right;">1,62</span>
<span class="t" style="top:351.92px;height:21.16px;line-height:21.16px;font-size:16.28px;color:#200000;font-weight:bold;right:864.83px;text-align:right;">0</span>
<span class="t" style="top:351.92px;height:21.16px;line-height:21.16px;font-size:16.28px;color:#000088;font-weight:bold;left:1060.17px;">S</span>
<span class="t" style="top:351.92px;height:21.16px;line-height:21.16px;font-size:16.28px;color:#000088;font-weight:bold;left:688.70px;width:834.78px;text-align:center;">0</span>
<span class="t" style="top:351.92px;height:21.16px;line-height:21.16px;font-size:16.28px;color:#000088;font-weight:bold;left:739.41px;width:834.78px;text-align:center;">0</span>
<span class="t" style="top:351.92px;height:21.16px;line-height:21.16px;font-size:16.28px;color:#000088;font-weight:bold;right:678.26px;text-align:right;">0,00</span>
<span class="t" style="top:351.92px;height:21.16px;line-height:21.16px;font-size:16.28px;color:#000088;font-weight:bold;right:487.72px;text-align:right;">0,00</span>
<span class="t" style="top:351.92px;height:21.16px;line-height:21.16px;font-size:16.28px;color:#000088;font-weight:bold;right:444.52px;text-align:right;">10</span>
<div class="b " style="left:57.91px;top:373.77px;width:1.04px;height:24.00px;background:rgba(0,0,0,0.05);"></div>
<div class="b " style="left:98.61px;top:373.77px;width:1.04px;height:24.00px;background:rgba(0,0,0,0.05);"></div>
<div class="b " style="left:139.93px;top:373.77px;width:1.04px;height:24.00px;background:rgba(0,0,0,0.05);"></div>
<div class="b " style="left:179.37px;top:373.77px;width:1.04px;height:24.00px;background:rgba(0,0,0,0.05);"></div>
<div class="b " style="left:223.83px;top:373.77px;width:1.04px;height:24.00px;background:rgba(0,0,0,0.05);"></div>
<div class="b " style="left:264.52px;top:373.77px;width:1.04px;height:24.00px;background:rgba(0,0,0,0.05);"></div>
<div class="b " style="left:306.26px;top:373.77px;width:1.04px;height:24.00px;background:rgba(0,0,0,0.05);"></div>
<div class="b " style="left:400.17px;top:373.77px;width:1.04px;height:24.00px;background:rgba(0,0,0,0.05);"></div>
<div class="b " style="left:728.87px;top:373.77px;width:1.04px;height:24.00px;background:rgba(0,0,0,0.05);"></div>
<div class="b " style="left:752.87px;top:373.77px;width:1.04px;height:24.00px;background:rgba(0,0,0,0.05);"></div>
<div class="b " style="left:775.83px;top:373.77px;width:1.04px;height:24.00px;background:rgba(0,0,0,0.05);"></div>
<div class="b " style="left:856.17px;top:373.77px;width:1.04px;height:24.00px;background:rgba(0,0,0,0.05);"></div>
<div class="b " style="left:876.00px;top:373.77px;width:1.04px;height:24.00px;background:rgba(0,0,0,0.05);"></div>
<div class="b " style="left:903.13px;top:373.77px;width:1.04px;height:24.00px;background:rgba(0,0,0,0.05);"></div>
<div class="b " style="left:980.35px;top:373.77px;width:1.04px;height:24.00px;background:rgba(0,0,0,0.05);"></div>
<div class="b " style="left:1056.10px;top:373.77px;width:1.04px;height:24.00px;background:rgba(0,0,0,0.05);"></div>
<div class="b " style="left:1077.39px;top:373.77px;width:1.04px;height:24.00px;background:rgba(0,0,0,0.05);"></div>
<div class="b " style="left:1110.78px;top:373.77px;width:1.04px;height:24.00px;background:rgba(0,0,0,0.05);"></div>
<div class="b " style="left:1161.91px;top:373.77px;width:1.04px;height:24.00px;background:rgba(0,0,0,0.05);"></div>
<div class="b " style="left:1243.30px;top:373.77px;width:1.04px;height:24.00px;background:rgba(0,0,0,0.05);"></div>
<div class="b " style="left:1342.43px;top:373.77px;width:1.04px;height:24.00px;background:rgba(0,0,0,0.05);"></div>
<div class="b " style="left:1435.30px;top:373.77px;width:1.04px;height:24.00px;background:rgba(0,0,0,0.05);"></div>
<div class="b " style="left:1477.04px;top:373.77px;width:1.04px;height:24.00px;background:rgba(0,0,0,0.05);"></div>
<div class="b " style="left:1627.30px;top:373.77px;width:1.04px;height:24.00px;background:rgba(0,0,0,0.05);"></div>
<div class="b " style="left:1667.58px;top:373.77px;width:1.04px;height:24.00px;background:rgba(0,0,0,0.05);"></div>
<div class="b " style="left:1852.70px;top:373.77px;width:1.04px;height:24.00px;background:rgba(0,0,0,0.05);"></div>
<div class="b " style="left:20.87px;top:397.25px;width:1875.13px;height:1.04px;background:rgba(0,0,0,0.05);"></div>
<div class="b " style="left:903.86px;top:375.23px;width:76.59px;height:22.33px;background:#0000fa;"></div>
<span class="t" style="top:375.92px;height:21.16px;line-height:21.16px;font-size:16.28px;color:#000;font-weight:bold;right:1863.65px;text-align:right;">1</span>
<span class="t" style="top:375.92px;height:21.16px;line-height:21.16px;font-size:16.28px;color:#000;font-weight:bold;right:1823.37px;text-align:right;">0</span>
<span class="t" style="top:375.92px;height:21.16px;line-height:21.16px;font-size:16.28px;color:#000;font-weight:bold;right:1781.84px;text-align:right;">1</span>
<span class="t" style="top:375.92px;height:21.16px;line-height:21.16px;font-size:16.28px;color:#000;font-weight:bold;right:1741.98px;text-align:right;">0</span>
<span class="t" style="top:375.92px;height:21.16px;line-height:21.16px;font-size:16.28px;color:#000;font-weight:bold;right:1697.53px;text-align:right;">1</span>
<span class="t" style="top:375.92px;height:21.16px;line-height:21.16px;font-size:16.28px;color:#000;font-weight:bold;right:1656.63px;text-align:right;">0</span>
<span class="t" style="top:375.92px;height:21.16px;line-height:21.16px;font-size:16.28px;color:#000;font-weight:bold;right:1615.30px;text-align:right;">15</span>
<span class="t" style="top:375.92px;height:21.16px;line-height:21.16px;font-size:16.28px;color:#000;font-weight:bold;letter-spacing:-0.29px;left:309.91px;">026608099</span>
<span class="t" style="top:375.92px;height:21.16px;line-height:21.16px;font-size:16.28px;color:#000;font-weight:bold;left:404.66px;">EFFERALGAN*10SUPP 150MG</span>
<span class="t" style="top:375.92px;height:21.16px;line-height:21.16px;font-size:16.28px;color:#000;font-weight:bold;left:322.43px;width:834.78px;text-align:center;">C</span>
<span class="t" style="top:375.92px;height:21.16px;line-height:21.16px;font-size:16.28px;color:#000;font-weight:bold;left:346.43px;width:834.78px;text-align:center;">B</span>
<span class="t" style="top:375.92px;height:21.16px;line-height:21.16px;font-size:16.28px;color:#000;font-weight:bold;right:1065.60px;text-align:right;">3,36</span>
<span class="t" style="top:375.92px;height:21.16px;line-height:21.16px;font-size:16.28px;color:#000;font-weight:bold;left:857.74px;">L</span>
<span class="t" style="top:375.92px;height:21.16px;line-height:21.16px;font-size:16.28px;color:#fff;font-weight:bold;right:941.22px;text-align:right;">5,30</span>
<span class="t" style="top:375.92px;height:21.16px;line-height:21.16px;font-size:16.28px;color:#000;font-weight:bold;right:864.83px;text-align:right;">0</span>
<span class="t" style="top:375.92px;height:21.16px;line-height:21.16px;font-size:16.28px;color:#000;font-weight:bold;left:1060.17px;">N</span>
<span class="t" style="top:375.92px;height:21.16px;line-height:21.16px;font-size:16.28px;color:#000;font-weight:bold;left:688.70px;width:834.78px;text-align:center;">0</span>
<span class="t" style="top:375.92px;height:21.16px;line-height:21.16px;font-size:16.28px;color:#000;font-weight:bold;left:739.41px;width:834.78px;text-align:center;">0</span>
<span class="t" style="top:375.92px;height:21.16px;line-height:21.16px;font-size:16.28px;color:#000;font-weight:bold;right:678.26px;text-align:right;">0,00</span>
<span class="t" style="top:375.92px;height:21.16px;line-height:21.16px;font-size:16.28px;color:#000;font-weight:bold;right:487.72px;text-align:right;">0,00</span>
<span class="t" style="top:375.92px;height:21.16px;line-height:21.16px;font-size:16.28px;color:#000;font-weight:bold;right:444.52px;text-align:right;">10</span>
<div class="b " style="left:57.91px;top:397.77px;width:1.04px;height:24.00px;background:rgba(0,0,0,0.05);"></div>
<div class="b " style="left:98.61px;top:397.77px;width:1.04px;height:24.00px;background:rgba(0,0,0,0.05);"></div>
<div class="b " style="left:139.93px;top:397.77px;width:1.04px;height:24.00px;background:rgba(0,0,0,0.05);"></div>
<div class="b " style="left:179.37px;top:397.77px;width:1.04px;height:24.00px;background:rgba(0,0,0,0.05);"></div>
<div class="b " style="left:223.83px;top:397.77px;width:1.04px;height:24.00px;background:rgba(0,0,0,0.05);"></div>
<div class="b " style="left:264.52px;top:397.77px;width:1.04px;height:24.00px;background:rgba(0,0,0,0.05);"></div>
<div class="b " style="left:306.26px;top:397.77px;width:1.04px;height:24.00px;background:rgba(0,0,0,0.05);"></div>
<div class="b " style="left:400.17px;top:397.77px;width:1.04px;height:24.00px;background:rgba(0,0,0,0.05);"></div>
<div class="b " style="left:728.87px;top:397.77px;width:1.04px;height:24.00px;background:rgba(0,0,0,0.05);"></div>
<div class="b " style="left:752.87px;top:397.77px;width:1.04px;height:24.00px;background:rgba(0,0,0,0.05);"></div>
<div class="b " style="left:775.83px;top:397.77px;width:1.04px;height:24.00px;background:rgba(0,0,0,0.05);"></div>
<div class="b " style="left:856.17px;top:397.77px;width:1.04px;height:24.00px;background:rgba(0,0,0,0.05);"></div>
<div class="b " style="left:876.00px;top:397.77px;width:1.04px;height:24.00px;background:rgba(0,0,0,0.05);"></div>
<div class="b " style="left:903.13px;top:397.77px;width:1.04px;height:24.00px;background:rgba(0,0,0,0.05);"></div>
<div class="b " style="left:980.35px;top:397.77px;width:1.04px;height:24.00px;background:rgba(0,0,0,0.05);"></div>
<div class="b " style="left:1056.10px;top:397.77px;width:1.04px;height:24.00px;background:rgba(0,0,0,0.05);"></div>
<div class="b " style="left:1077.39px;top:397.77px;width:1.04px;height:24.00px;background:rgba(0,0,0,0.05);"></div>
<div class="b " style="left:1110.78px;top:397.77px;width:1.04px;height:24.00px;background:rgba(0,0,0,0.05);"></div>
<div class="b " style="left:1161.91px;top:397.77px;width:1.04px;height:24.00px;background:rgba(0,0,0,0.05);"></div>
<div class="b " style="left:1243.30px;top:397.77px;width:1.04px;height:24.00px;background:rgba(0,0,0,0.05);"></div>
<div class="b " style="left:1342.43px;top:397.77px;width:1.04px;height:24.00px;background:rgba(0,0,0,0.05);"></div>
<div class="b " style="left:1435.30px;top:397.77px;width:1.04px;height:24.00px;background:rgba(0,0,0,0.05);"></div>
<div class="b " style="left:1477.04px;top:397.77px;width:1.04px;height:24.00px;background:rgba(0,0,0,0.05);"></div>
<div class="b " style="left:1627.30px;top:397.77px;width:1.04px;height:24.00px;background:rgba(0,0,0,0.05);"></div>
<div class="b " style="left:1667.58px;top:397.77px;width:1.04px;height:24.00px;background:rgba(0,0,0,0.05);"></div>
<div class="b " style="left:1852.70px;top:397.77px;width:1.04px;height:24.00px;background:rgba(0,0,0,0.05);"></div>
<div class="b " style="left:20.87px;top:421.25px;width:1875.13px;height:1.04px;background:rgba(0,0,0,0.05);"></div>
<div class="b " style="left:903.86px;top:399.23px;width:76.59px;height:22.33px;background:#0000fa;"></div>
<span class="t" style="top:399.92px;height:21.16px;line-height:21.16px;font-size:16.28px;color:#000;font-weight:bold;right:1863.65px;text-align:right;">3</span>
<span class="t" style="top:399.92px;height:21.16px;line-height:21.16px;font-size:16.28px;color:#000;font-weight:bold;right:1823.37px;text-align:right;">0</span>
<span class="t" style="top:399.92px;height:21.16px;line-height:21.16px;font-size:16.28px;color:#000;font-weight:bold;right:1781.84px;text-align:right;">3</span>
<span class="t" style="top:399.92px;height:21.16px;line-height:21.16px;font-size:16.28px;color:#000;font-weight:bold;right:1741.98px;text-align:right;">0</span>
<span class="t" style="top:399.92px;height:21.16px;line-height:21.16px;font-size:16.28px;color:#000;font-weight:bold;right:1697.53px;text-align:right;">3</span>
<span class="t" style="top:399.92px;height:21.16px;line-height:21.16px;font-size:16.28px;color:#000;font-weight:bold;right:1656.63px;text-align:right;">0</span>
<span class="t" style="top:399.92px;height:21.16px;line-height:21.16px;font-size:16.28px;color:#000;font-weight:bold;right:1615.30px;text-align:right;">9</span>
<span class="t" style="top:399.92px;height:21.16px;line-height:21.16px;font-size:16.28px;color:#000;font-weight:bold;letter-spacing:-0.29px;left:309.91px;">013046040</span>
<span class="t" style="top:399.92px;height:21.16px;line-height:21.16px;font-size:16.28px;color:#000;font-weight:bold;left:404.66px;">ENTEROGERMINA*OS 20FL 2MLD/5ML</span>
<span class="t" style="top:399.92px;height:21.16px;line-height:21.16px;font-size:16.28px;color:#000;font-weight:bold;left:322.43px;width:834.78px;text-align:center;">C</span>
<span class="t" style="top:399.92px;height:21.16px;line-height:21.16px;font-size:16.28px;color:#000;font-weight:bold;left:346.43px;width:834.78px;text-align:center;">B</span>
<span class="t" style="top:399.92px;height:21.16px;line-height:21.16px;font-size:16.28px;color:#000;font-weight:bold;right:1065.60px;text-align:right;">7,83</span>
<span class="t" style="top:399.92px;height:21.16px;line-height:21.16px;font-size:16.28px;color:#000;font-weight:bold;left:857.74px;">O</span>
<span class="t" style="top:399.92px;height:21.16px;line-height:21.16px;font-size:16.28px;color:#fff;font-weight:bold;right:941.22px;text-align:right;">14,20</span>
<span class="t" style="top:399.92px;height:21.16px;line-height:21.16px;font-size:16.28px;color:#000;font-weight:bold;right:864.83px;text-align:right;">0</span>
<span class="t" style="top:399.92px;height:21.16px;line-height:21.16px;font-size:16.28px;color:#000;font-weight:bold;left:1060.17px;">N</span>
<span class="t" style="top:399.92px;height:21.16px;line-height:21.16px;font-size:16.28px;color:#000;font-weight:bold;left:688.70px;width:834.78px;text-align:center;">0</span>
<span class="t" style="top:399.92px;height:21.16px;line-height:21.16px;font-size:16.28px;color:#000;font-weight:bold;left:739.41px;width:834.78px;text-align:center;">0</span>
<span class="t" style="top:399.92px;height:21.16px;line-height:21.16px;font-size:16.28px;color:#000;font-weight:bold;right:678.26px;text-align:right;">0,00</span>
<span class="t" style="top:399.92px;height:21.16px;line-height:21.16px;font-size:16.28px;color:#000;font-weight:bold;letter-spacing:-0.09px;left:1246.54px;">01/05/2017</span>
<span class="t" style="top:399.92px;height:21.16px;line-height:21.16px;font-size:16.28px;color:#000;font-weight:bold;right:487.72px;text-align:right;">0,00</span>
<span class="t" style="top:399.92px;height:21.16px;line-height:21.16px;font-size:16.28px;color:#000;font-weight:bold;right:444.52px;text-align:right;">10</span>
<div class="b " style="left:57.91px;top:421.77px;width:1.04px;height:24.00px;background:rgba(0,0,0,0.05);"></div>
<div class="b " style="left:98.61px;top:421.77px;width:1.04px;height:24.00px;background:rgba(0,0,0,0.05);"></div>
<div class="b " style="left:139.93px;top:421.77px;width:1.04px;height:24.00px;background:rgba(0,0,0,0.05);"></div>
<div class="b " style="left:179.37px;top:421.77px;width:1.04px;height:24.00px;background:rgba(0,0,0,0.05);"></div>
<div class="b " style="left:223.83px;top:421.77px;width:1.04px;height:24.00px;background:rgba(0,0,0,0.05);"></div>
<div class="b " style="left:264.52px;top:421.77px;width:1.04px;height:24.00px;background:rgba(0,0,0,0.05);"></div>
<div class="b " style="left:306.26px;top:421.77px;width:1.04px;height:24.00px;background:rgba(0,0,0,0.05);"></div>
<div class="b " style="left:400.17px;top:421.77px;width:1.04px;height:24.00px;background:rgba(0,0,0,0.05);"></div>
<div class="b " style="left:728.87px;top:421.77px;width:1.04px;height:24.00px;background:rgba(0,0,0,0.05);"></div>
<div class="b " style="left:752.87px;top:421.77px;width:1.04px;height:24.00px;background:rgba(0,0,0,0.05);"></div>
<div class="b " style="left:775.83px;top:421.77px;width:1.04px;height:24.00px;background:rgba(0,0,0,0.05);"></div>
<div class="b " style="left:856.17px;top:421.77px;width:1.04px;height:24.00px;background:rgba(0,0,0,0.05);"></div>
<div class="b " style="left:876.00px;top:421.77px;width:1.04px;height:24.00px;background:rgba(0,0,0,0.05);"></div>
<div class="b " style="left:903.13px;top:421.77px;width:1.04px;height:24.00px;background:rgba(0,0,0,0.05);"></div>
<div class="b " style="left:980.35px;top:421.77px;width:1.04px;height:24.00px;background:rgba(0,0,0,0.05);"></div>
<div class="b " style="left:1056.10px;top:421.77px;width:1.04px;height:24.00px;background:rgba(0,0,0,0.05);"></div>
<div class="b " style="left:1077.39px;top:421.77px;width:1.04px;height:24.00px;background:rgba(0,0,0,0.05);"></div>
<div class="b " style="left:1110.78px;top:421.77px;width:1.04px;height:24.00px;background:rgba(0,0,0,0.05);"></div>
<div class="b " style="left:1161.91px;top:421.77px;width:1.04px;height:24.00px;background:rgba(0,0,0,0.05);"></div>
<div class="b " style="left:1243.30px;top:421.77px;width:1.04px;height:24.00px;background:rgba(0,0,0,0.05);"></div>
<div class="b " style="left:1342.43px;top:421.77px;width:1.04px;height:24.00px;background:rgba(0,0,0,0.05);"></div>
<div class="b " style="left:1435.30px;top:421.77px;width:1.04px;height:24.00px;background:rgba(0,0,0,0.05);"></div>
<div class="b " style="left:1477.04px;top:421.77px;width:1.04px;height:24.00px;background:rgba(0,0,0,0.05);"></div>
<div class="b " style="left:1627.30px;top:421.77px;width:1.04px;height:24.00px;background:rgba(0,0,0,0.05);"></div>
<div class="b " style="left:1667.58px;top:421.77px;width:1.04px;height:24.00px;background:rgba(0,0,0,0.05);"></div>
<div class="b " style="left:1852.70px;top:421.77px;width:1.04px;height:24.00px;background:rgba(0,0,0,0.05);"></div>
<div class="b " style="left:20.87px;top:445.25px;width:1875.13px;height:1.04px;background:rgba(0,0,0,0.05);"></div>
<div class="b " style="left:903.86px;top:423.23px;width:76.59px;height:22.33px;background:#0000fa;"></div>
<span class="t" style="top:423.92px;height:21.16px;line-height:21.16px;font-size:16.28px;color:#000;font-weight:bold;right:1863.65px;text-align:right;">1</span>
<span class="t" style="top:423.92px;height:21.16px;line-height:21.16px;font-size:16.28px;color:#000;font-weight:bold;right:1823.37px;text-align:right;">0</span>
<span class="t" style="top:423.92px;height:21.16px;line-height:21.16px;font-size:16.28px;color:#000;font-weight:bold;right:1781.84px;text-align:right;">1</span>
<span class="t" style="top:423.92px;height:21.16px;line-height:21.16px;font-size:16.28px;color:#000;font-weight:bold;right:1741.98px;text-align:right;">0</span>
<span class="t" style="top:423.92px;height:21.16px;line-height:21.16px;font-size:16.28px;color:#000;font-weight:bold;right:1697.53px;text-align:right;">1</span>
<span class="t" style="top:423.92px;height:21.16px;line-height:21.16px;font-size:16.28px;color:#000;font-weight:bold;right:1656.63px;text-align:right;">0</span>
<span class="t" style="top:423.92px;height:21.16px;line-height:21.16px;font-size:16.28px;color:#000;font-weight:bold;right:1615.30px;text-align:right;">8</span>
<span class="t" style="top:423.92px;height:21.16px;line-height:21.16px;font-size:16.28px;color:#000;font-weight:bold;letter-spacing:-0.29px;left:309.91px;">042822027</span>
<div class="b " style="left:401.11px;top:422.82px;width:23.79px;height:22.75px;background:#f7f9f3;"></div>
<svg class="b" style="left:402.57px;top:425.43px;width:21.29px;height:17.53px" viewBox="0 0 22 20"><path d="M1.5 11 L5 7.5 L9 11.5 L18.5 1.5 L21 4.5 L9.5 18.5 Z" fill="#3fae2a" stroke="#2a7d1c" stroke-width="1"/><path d="M3.5 11 L5 9.5 L9 13.5 L18.5 3.5" fill="none" stroke="#b8ee9a" stroke-width="1.3"/></svg>
<span class="t" style="top:423.92px;height:21.16px;line-height:21.16px;font-size:16.28px;color:#000;font-weight:bold;left:427.41px;">FROBEN GOLA*NEBUL 15ML 0,25%</span>
<span class="t" style="top:423.92px;height:21.16px;line-height:21.16px;font-size:16.28px;color:#000;font-weight:bold;left:322.43px;width:834.78px;text-align:center;">C</span>
<span class="t" style="top:423.92px;height:21.16px;line-height:21.16px;font-size:16.28px;color:#000;font-weight:bold;left:346.43px;width:834.78px;text-align:center;">B</span>
<span class="t" style="top:423.92px;height:21.16px;line-height:21.16px;font-size:16.28px;color:#000;font-weight:bold;right:1065.60px;text-align:right;">5,89</span>
<span class="t" style="top:423.92px;height:21.16px;line-height:21.16px;font-size:16.28px;color:#000;font-weight:bold;left:857.74px;">L</span>
<span class="t" style="top:423.92px;height:21.16px;line-height:21.16px;font-size:16.28px;color:#fff;font-weight:bold;right:941.22px;text-align:right;">9,30</span>
<span class="t" style="top:423.92px;height:21.16px;line-height:21.16px;font-size:16.28px;color:#000;font-weight:bold;right:864.83px;text-align:right;">0</span>
<span class="t" style="top:423.92px;height:21.16px;line-height:21.16px;font-size:16.28px;color:#000;font-weight:bold;left:1060.17px;">N</span>
<span class="t" style="top:423.92px;height:21.16px;line-height:21.16px;font-size:16.28px;color:#000;font-weight:bold;left:688.70px;width:834.78px;text-align:center;">0</span>
<span class="t" style="top:423.92px;height:21.16px;line-height:21.16px;font-size:16.28px;color:#000;font-weight:bold;left:739.41px;width:834.78px;text-align:center;">0</span>
<span class="t" style="top:423.92px;height:21.16px;line-height:21.16px;font-size:16.28px;color:#000;font-weight:bold;right:678.26px;text-align:right;">0,00</span>
<span class="t" style="top:423.92px;height:21.16px;line-height:21.16px;font-size:16.28px;color:#000;font-weight:bold;right:487.72px;text-align:right;">0,00</span>
<span class="t" style="top:423.92px;height:21.16px;line-height:21.16px;font-size:16.28px;color:#000;font-weight:bold;right:444.52px;text-align:right;">10</span>
<div class="b " style="left:20.87px;top:445.77px;width:1875.13px;height:24.00px;background:#ffff00;"></div>
<div class="b " style="left:57.91px;top:445.77px;width:1.04px;height:24.00px;background:rgba(255,255,255,0.4);"></div>
<div class="b " style="left:98.61px;top:445.77px;width:1.04px;height:24.00px;background:rgba(255,255,255,0.4);"></div>
<div class="b " style="left:139.93px;top:445.77px;width:1.04px;height:24.00px;background:rgba(255,255,255,0.4);"></div>
<div class="b " style="left:179.37px;top:445.77px;width:1.04px;height:24.00px;background:rgba(255,255,255,0.4);"></div>
<div class="b " style="left:223.83px;top:445.77px;width:1.04px;height:24.00px;background:rgba(255,255,255,0.4);"></div>
<div class="b " style="left:264.52px;top:445.77px;width:1.04px;height:24.00px;background:rgba(255,255,255,0.4);"></div>
<div class="b " style="left:306.26px;top:445.77px;width:1.04px;height:24.00px;background:rgba(255,255,255,0.4);"></div>
<div class="b " style="left:400.17px;top:445.77px;width:1.04px;height:24.00px;background:rgba(255,255,255,0.4);"></div>
<div class="b " style="left:728.87px;top:445.77px;width:1.04px;height:24.00px;background:rgba(255,255,255,0.4);"></div>
<div class="b " style="left:752.87px;top:445.77px;width:1.04px;height:24.00px;background:rgba(255,255,255,0.4);"></div>
<div class="b " style="left:775.83px;top:445.77px;width:1.04px;height:24.00px;background:rgba(255,255,255,0.4);"></div>
<div class="b " style="left:856.17px;top:445.77px;width:1.04px;height:24.00px;background:rgba(255,255,255,0.4);"></div>
<div class="b " style="left:876.00px;top:445.77px;width:1.04px;height:24.00px;background:rgba(255,255,255,0.4);"></div>
<div class="b " style="left:903.13px;top:445.77px;width:1.04px;height:24.00px;background:rgba(255,255,255,0.4);"></div>
<div class="b " style="left:980.35px;top:445.77px;width:1.04px;height:24.00px;background:rgba(255,255,255,0.4);"></div>
<div class="b " style="left:1056.10px;top:445.77px;width:1.04px;height:24.00px;background:rgba(255,255,255,0.4);"></div>
<div class="b " style="left:1077.39px;top:445.77px;width:1.04px;height:24.00px;background:rgba(255,255,255,0.4);"></div>
<div class="b " style="left:1110.78px;top:445.77px;width:1.04px;height:24.00px;background:rgba(255,255,255,0.4);"></div>
<div class="b " style="left:1161.91px;top:445.77px;width:1.04px;height:24.00px;background:rgba(255,255,255,0.4);"></div>
<div class="b " style="left:1243.30px;top:445.77px;width:1.04px;height:24.00px;background:rgba(255,255,255,0.4);"></div>
<div class="b " style="left:1342.43px;top:445.77px;width:1.04px;height:24.00px;background:rgba(255,255,255,0.4);"></div>
<div class="b " style="left:1435.30px;top:445.77px;width:1.04px;height:24.00px;background:rgba(255,255,255,0.4);"></div>
<div class="b " style="left:1477.04px;top:445.77px;width:1.04px;height:24.00px;background:rgba(255,255,255,0.4);"></div>
<div class="b " style="left:1627.30px;top:445.77px;width:1.04px;height:24.00px;background:rgba(255,255,255,0.4);"></div>
<div class="b " style="left:1667.58px;top:445.77px;width:1.04px;height:24.00px;background:rgba(255,255,255,0.4);"></div>
<div class="b " style="left:1852.70px;top:445.77px;width:1.04px;height:24.00px;background:rgba(255,255,255,0.4);"></div>
<div class="b " style="left:20.87px;top:469.25px;width:1875.13px;height:1.04px;background:rgba(255,255,255,0.45);"></div>
<div class="b " style="left:981.29px;top:447.03px;width:75.13px;height:22.33px;background:#ff0000;"></div>
<span class="t" style="top:447.92px;height:21.16px;line-height:21.16px;font-size:16.28px;color:#000088;font-weight:bold;right:1863.65px;text-align:right;">2</span>
<span class="t" style="top:447.92px;height:21.16px;line-height:21.16px;font-size:16.28px;color:#000088;font-weight:bold;right:1823.37px;text-align:right;">0</span>
<span class="t" style="top:447.92px;height:21.16px;line-height:21.16px;font-size:16.28px;color:#000088;font-weight:bold;right:1781.84px;text-align:right;">2</span>
<span class="t" style="top:447.92px;height:21.16px;line-height:21.16px;font-size:16.28px;color:#000088;font-weight:bold;right:1741.98px;text-align:right;">0</span>
<span class="t" style="top:447.92px;height:21.16px;line-height:21.16px;font-size:16.28px;color:#000088;font-weight:bold;right:1697.53px;text-align:right;">2</span>
<span class="t" style="top:447.92px;height:21.16px;line-height:21.16px;font-size:16.28px;color:#000088;font-weight:bold;right:1656.63px;text-align:right;">0</span>
<span class="t" style="top:447.92px;height:21.16px;line-height:21.16px;font-size:16.28px;color:#000088;font-weight:bold;right:1615.30px;text-align:right;">13</span>
<span class="t" style="top:447.92px;height:21.16px;line-height:21.16px;font-size:16.28px;color:#000088;font-weight:bold;letter-spacing:-0.29px;left:309.91px;">029393016</span>
<span class="t" style="top:447.92px;height:21.16px;line-height:21.16px;font-size:16.28px;color:#000088;font-weight:bold;left:404.66px;">LOSAPREX*28CPR RIV 50MG</span>
<span class="t" style="top:447.92px;height:21.16px;line-height:21.16px;font-size:16.28px;color:#000088;font-weight:bold;left:322.43px;width:834.78px;text-align:center;">A</span>
<span class="t" style="top:447.92px;height:21.16px;line-height:21.16px;font-size:16.28px;color:#000088;font-weight:bold;left:346.43px;width:834.78px;text-align:center;">A</span>
<span class="t" style="top:447.92px;height:21.16px;line-height:21.16px;font-size:16.28px;color:#000088;font-weight:bold;right:1065.60px;text-align:right;">7,02</span>
<span class="t" style="top:447.92px;height:21.16px;line-height:21.16px;font-size:16.28px;color:#000088;font-weight:bold;left:857.74px;">L</span>
<span class="t" style="top:447.92px;height:21.16px;line-height:21.16px;font-size:16.28px;color:#000088;font-weight:bold;right:941.22px;text-align:right;">11,09</span>
<span class="t" style="top:447.92px;height:21.16px;line-height:21.16px;font-size:16.28px;color:#200000;font-weight:bold;right:864.83px;text-align:right;">0</span>
<span class="t" style="top:447.92px;height:21.16px;line-height:21.16px;font-size:16.28px;color:#000088;font-weight:bold;left:1060.17px;">S</span>
<span class="t" style="top:447.92px;height:21.16px;line-height:21.16px;font-size:16.28px;color:#000088;font-weight:bold;left:688.70px;width:834.78px;text-align:center;">0</span>
<span class="t" style="top:447.92px;height:21.16px;line-height:21.16px;font-size:16.28px;color:#000088;font-weight:bold;left:739.41px;width:834.78px;text-align:center;">0</span>
<span class="t" style="top:447.92px;height:21.16px;line-height:21.16px;font-size:16.28px;color:#000088;font-weight:bold;right:678.26px;text-align:right;">0,00</span>
<span class="t" style="top:447.92px;height:21.16px;line-height:21.16px;font-size:16.28px;color:#000088;font-weight:bold;right:487.72px;text-align:right;">0,00</span>
<span class="t" style="top:447.92px;height:21.16px;line-height:21.16px;font-size:16.28px;color:#000088;font-weight:bold;right:444.52px;text-align:right;">10</span>
<div class="b " style="left:57.91px;top:469.77px;width:1.04px;height:24.00px;background:rgba(0,0,0,0.05);"></div>
<div class="b " style="left:98.61px;top:469.77px;width:1.04px;height:24.00px;background:rgba(0,0,0,0.05);"></div>
<div class="b " style="left:139.93px;top:469.77px;width:1.04px;height:24.00px;background:rgba(0,0,0,0.05);"></div>
<div class="b " style="left:179.37px;top:469.77px;width:1.04px;height:24.00px;background:rgba(0,0,0,0.05);"></div>
<div class="b " style="left:223.83px;top:469.77px;width:1.04px;height:24.00px;background:rgba(0,0,0,0.05);"></div>
<div class="b " style="left:264.52px;top:469.77px;width:1.04px;height:24.00px;background:rgba(0,0,0,0.05);"></div>
<div class="b " style="left:306.26px;top:469.77px;width:1.04px;height:24.00px;background:rgba(0,0,0,0.05);"></div>
<div class="b " style="left:400.17px;top:469.77px;width:1.04px;height:24.00px;background:rgba(0,0,0,0.05);"></div>
<div class="b " style="left:728.87px;top:469.77px;width:1.04px;height:24.00px;background:rgba(0,0,0,0.05);"></div>
<div class="b " style="left:752.87px;top:469.77px;width:1.04px;height:24.00px;background:rgba(0,0,0,0.05);"></div>
<div class="b " style="left:775.83px;top:469.77px;width:1.04px;height:24.00px;background:rgba(0,0,0,0.05);"></div>
<div class="b " style="left:856.17px;top:469.77px;width:1.04px;height:24.00px;background:rgba(0,0,0,0.05);"></div>
<div class="b " style="left:876.00px;top:469.77px;width:1.04px;height:24.00px;background:rgba(0,0,0,0.05);"></div>
<div class="b " style="left:903.13px;top:469.77px;width:1.04px;height:24.00px;background:rgba(0,0,0,0.05);"></div>
<div class="b " style="left:980.35px;top:469.77px;width:1.04px;height:24.00px;background:rgba(0,0,0,0.05);"></div>
<div class="b " style="left:1056.10px;top:469.77px;width:1.04px;height:24.00px;background:rgba(0,0,0,0.05);"></div>
<div class="b " style="left:1077.39px;top:469.77px;width:1.04px;height:24.00px;background:rgba(0,0,0,0.05);"></div>
<div class="b " style="left:1110.78px;top:469.77px;width:1.04px;height:24.00px;background:rgba(0,0,0,0.05);"></div>
<div class="b " style="left:1161.91px;top:469.77px;width:1.04px;height:24.00px;background:rgba(0,0,0,0.05);"></div>
<div class="b " style="left:1243.30px;top:469.77px;width:1.04px;height:24.00px;background:rgba(0,0,0,0.05);"></div>
<div class="b " style="left:1342.43px;top:469.77px;width:1.04px;height:24.00px;background:rgba(0,0,0,0.05);"></div>
<div class="b " style="left:1435.30px;top:469.77px;width:1.04px;height:24.00px;background:rgba(0,0,0,0.05);"></div>
<div class="b " style="left:1477.04px;top:469.77px;width:1.04px;height:24.00px;background:rgba(0,0,0,0.05);"></div>
<div class="b " style="left:1627.30px;top:469.77px;width:1.04px;height:24.00px;background:rgba(0,0,0,0.05);"></div>
<div class="b " style="left:1667.58px;top:469.77px;width:1.04px;height:24.00px;background:rgba(0,0,0,0.05);"></div>
<div class="b " style="left:1852.70px;top:469.77px;width:1.04px;height:24.00px;background:rgba(0,0,0,0.05);"></div>
<div class="b " style="left:20.87px;top:493.25px;width:1875.13px;height:1.04px;background:rgba(0,0,0,0.05);"></div>
<span class="t" style="top:471.92px;height:21.16px;line-height:21.16px;font-size:16.28px;color:#000;font-weight:bold;right:1863.65px;text-align:right;">3</span>
<span class="t" style="top:471.92px;height:21.16px;line-height:21.16px;font-size:16.28px;color:#000;font-weight:bold;right:1823.37px;text-align:right;">1</span>
<span class="t" style="top:471.92px;height:21.16px;line-height:21.16px;font-size:16.28px;color:#000;font-weight:bold;right:1781.84px;text-align:right;">2</span>
<span class="t" style="top:471.92px;height:21.16px;line-height:21.16px;font-size:16.28px;color:#000;font-weight:bold;right:1741.98px;text-align:right;">0</span>
<span class="t" style="top:471.92px;height:21.16px;line-height:21.16px;font-size:16.28px;color:#000;font-weight:bold;right:1697.53px;text-align:right;">2</span>
<span class="t" style="top:471.92px;height:21.16px;line-height:21.16px;font-size:16.28px;color:#000;font-weight:bold;right:1656.63px;text-align:right;">0</span>
<span class="t" style="top:471.92px;height:21.16px;line-height:21.16px;font-size:16.28px;color:#000;font-weight:bold;right:1615.30px;text-align:right;">2</span>
<span class="t" style="top:471.92px;height:21.16px;line-height:21.16px;font-size:16.28px;color:#000;font-weight:bold;letter-spacing:-0.29px;left:309.91px;">910777325</span>
<span class="t" style="top:471.92px;height:21.16px;line-height:21.16px;font-size:16.28px;color:#000;font-weight:bold;left:404.66px;">MATERASSO ANTIDECUBITO195X90X5</span>
<span class="t" style="top:471.92px;height:21.16px;line-height:21.16px;font-size:16.28px;color:#000;font-weight:bold;left:322.43px;width:834.78px;text-align:center;">X</span>
<span class="t" style="top:471.92px;height:21.16px;line-height:21.16px;font-size:16.28px;color:#000;font-weight:bold;left:346.43px;width:834.78px;text-align:center;">P</span>
<span class="t" style="top:471.92px;height:21.16px;line-height:21.16px;font-size:16.28px;color:#000;font-weight:bold;right:1065.60px;text-align:right;">218,62</span>
<span class="t" style="top:471.92px;height:21.16px;line-height:21.16px;font-size:16.28px;color:#000;font-weight:bold;left:857.74px;">B</span>
<span class="t" style="top:471.92px;height:21.16px;line-height:21.16px;font-size:16.28px;color:#000;font-weight:bold;right:941.22px;text-align:right;">326,44</span>
<span class="t" style="top:471.92px;height:21.16px;line-height:21.16px;font-size:16.28px;color:#000;font-weight:bold;right:864.83px;text-align:right;">0</span>
<span class="t" style="top:471.92px;height:21.16px;line-height:21.16px;font-size:16.28px;color:#000;font-weight:bold;left:1060.17px;">N</span>
<span class="t" style="top:471.92px;height:21.16px;line-height:21.16px;font-size:16.28px;color:#000;font-weight:bold;left:688.70px;width:834.78px;text-align:center;">0</span>
<span class="t" style="top:471.92px;height:21.16px;line-height:21.16px;font-size:16.28px;color:#000;font-weight:bold;left:739.41px;width:834.78px;text-align:center;">0</span>
<span class="t" style="top:471.92px;height:21.16px;line-height:21.16px;font-size:16.28px;color:#000;font-weight:bold;right:678.26px;text-align:right;">0,00</span>
<span class="t" style="top:471.92px;height:21.16px;line-height:21.16px;font-size:16.28px;color:#000;font-weight:bold;right:487.72px;text-align:right;">0,00</span>
<span class="t" style="top:471.92px;height:21.16px;line-height:21.16px;font-size:16.28px;color:#000;font-weight:bold;right:444.52px;text-align:right;">4</span>
<div class="b " style="left:20.87px;top:493.77px;width:1875.13px;height:24.00px;background:#ffff00;"></div>
<div class="b " style="left:57.91px;top:493.77px;width:1.04px;height:24.00px;background:rgba(255,255,255,0.4);"></div>
<div class="b " style="left:98.61px;top:493.77px;width:1.04px;height:24.00px;background:rgba(255,255,255,0.4);"></div>
<div class="b " style="left:139.93px;top:493.77px;width:1.04px;height:24.00px;background:rgba(255,255,255,0.4);"></div>
<div class="b " style="left:179.37px;top:493.77px;width:1.04px;height:24.00px;background:rgba(255,255,255,0.4);"></div>
<div class="b " style="left:223.83px;top:493.77px;width:1.04px;height:24.00px;background:rgba(255,255,255,0.4);"></div>
<div class="b " style="left:264.52px;top:493.77px;width:1.04px;height:24.00px;background:rgba(255,255,255,0.4);"></div>
<div class="b " style="left:306.26px;top:493.77px;width:1.04px;height:24.00px;background:rgba(255,255,255,0.4);"></div>
<div class="b " style="left:400.17px;top:493.77px;width:1.04px;height:24.00px;background:rgba(255,255,255,0.4);"></div>
<div class="b " style="left:728.87px;top:493.77px;width:1.04px;height:24.00px;background:rgba(255,255,255,0.4);"></div>
<div class="b " style="left:752.87px;top:493.77px;width:1.04px;height:24.00px;background:rgba(255,255,255,0.4);"></div>
<div class="b " style="left:775.83px;top:493.77px;width:1.04px;height:24.00px;background:rgba(255,255,255,0.4);"></div>
<div class="b " style="left:856.17px;top:493.77px;width:1.04px;height:24.00px;background:rgba(255,255,255,0.4);"></div>
<div class="b " style="left:876.00px;top:493.77px;width:1.04px;height:24.00px;background:rgba(255,255,255,0.4);"></div>
<div class="b " style="left:903.13px;top:493.77px;width:1.04px;height:24.00px;background:rgba(255,255,255,0.4);"></div>
<div class="b " style="left:980.35px;top:493.77px;width:1.04px;height:24.00px;background:rgba(255,255,255,0.4);"></div>
<div class="b " style="left:1056.10px;top:493.77px;width:1.04px;height:24.00px;background:rgba(255,255,255,0.4);"></div>
<div class="b " style="left:1077.39px;top:493.77px;width:1.04px;height:24.00px;background:rgba(255,255,255,0.4);"></div>
<div class="b " style="left:1110.78px;top:493.77px;width:1.04px;height:24.00px;background:rgba(255,255,255,0.4);"></div>
<div class="b " style="left:1161.91px;top:493.77px;width:1.04px;height:24.00px;background:rgba(255,255,255,0.4);"></div>
<div class="b " style="left:1243.30px;top:493.77px;width:1.04px;height:24.00px;background:rgba(255,255,255,0.4);"></div>
<div class="b " style="left:1342.43px;top:493.77px;width:1.04px;height:24.00px;background:rgba(255,255,255,0.4);"></div>
<div class="b " style="left:1435.30px;top:493.77px;width:1.04px;height:24.00px;background:rgba(255,255,255,0.4);"></div>
<div class="b " style="left:1477.04px;top:493.77px;width:1.04px;height:24.00px;background:rgba(255,255,255,0.4);"></div>
<div class="b " style="left:1627.30px;top:493.77px;width:1.04px;height:24.00px;background:rgba(255,255,255,0.4);"></div>
<div class="b " style="left:1667.58px;top:493.77px;width:1.04px;height:24.00px;background:rgba(255,255,255,0.4);"></div>
<div class="b " style="left:1852.70px;top:493.77px;width:1.04px;height:24.00px;background:rgba(255,255,255,0.4);"></div>
<div class="b " style="left:20.87px;top:517.25px;width:1875.13px;height:1.04px;background:rgba(255,255,255,0.45);"></div>
<span class="t" style="top:495.92px;height:21.16px;line-height:21.16px;font-size:16.28px;color:#000088;font-weight:bold;right:1863.65px;text-align:right;">7</span>
<span class="t" style="top:495.92px;height:21.16px;line-height:21.16px;font-size:16.28px;color:#000088;font-weight:bold;right:1823.37px;text-align:right;">0</span>
<span class="t" style="top:495.92px;height:21.16px;line-height:21.16px;font-size:16.28px;color:#000088;font-weight:bold;right:1781.84px;text-align:right;">7</span>
<span class="t" style="top:495.92px;height:21.16px;line-height:21.16px;font-size:16.28px;color:#000088;font-weight:bold;right:1741.98px;text-align:right;">0</span>
<span class="t" style="top:495.92px;height:21.16px;line-height:21.16px;font-size:16.28px;color:#000088;font-weight:bold;right:1697.53px;text-align:right;">7</span>
<span class="t" style="top:495.92px;height:21.16px;line-height:21.16px;font-size:16.28px;color:#000088;font-weight:bold;right:1656.63px;text-align:right;">0</span>
<span class="t" style="top:495.92px;height:21.16px;line-height:21.16px;font-size:16.28px;color:#000088;font-weight:bold;right:1615.30px;text-align:right;">5</span>
<span class="t" style="top:495.92px;height:21.16px;line-height:21.16px;font-size:16.28px;color:#000088;font-weight:bold;letter-spacing:-0.29px;left:309.91px;">037888068</span>
<span class="t" style="top:495.92px;height:21.16px;line-height:21.16px;font-size:16.28px;color:#000088;font-weight:bold;left:404.66px;">PAFINUR*30CPR 10MG</span>
<span class="t" style="top:495.92px;height:21.16px;line-height:21.16px;font-size:16.28px;color:#000088;font-weight:bold;left:322.43px;width:834.78px;text-align:center;">A</span>
<span class="t" style="top:495.92px;height:21.16px;line-height:21.16px;font-size:16.28px;color:#000088;font-weight:bold;left:346.43px;width:834.78px;text-align:center;">A</span>
<span class="t" style="top:495.92px;height:21.16px;line-height:21.16px;font-size:16.28px;color:#000088;font-weight:bold;right:1065.60px;text-align:right;">8,11</span>
<span class="t" style="top:495.92px;height:21.16px;line-height:21.16px;font-size:16.28px;color:#000088;font-weight:bold;left:857.74px;">O</span>
<span class="t" style="top:495.92px;height:21.16px;line-height:21.16px;font-size:16.28px;color:#000088;font-weight:bold;right:941.22px;text-align:right;">9,79</span>
<span class="t" style="top:495.92px;height:21.16px;line-height:21.16px;font-size:16.28px;color:#000088;font-weight:bold;right:864.83px;text-align:right;">0</span>
<span class="t" style="top:495.92px;height:21.16px;line-height:21.16px;font-size:16.28px;color:#000088;font-weight:bold;left:1060.17px;">N</span>
<span class="t" style="top:495.92px;height:21.16px;line-height:21.16px;font-size:16.28px;color:#000088;font-weight:bold;left:688.70px;width:834.78px;text-align:center;">0</span>
<span class="t" style="top:495.92px;height:21.16px;line-height:21.16px;font-size:16.28px;color:#000088;font-weight:bold;left:739.41px;width:834.78px;text-align:center;">0</span>
<span class="t" style="top:495.92px;height:21.16px;line-height:21.16px;font-size:16.28px;color:#000088;font-weight:bold;right:678.26px;text-align:right;">0,00</span>
<span class="t" style="top:495.92px;height:21.16px;line-height:21.16px;font-size:16.28px;color:#000088;font-weight:bold;right:487.72px;text-align:right;">0,00</span>
<span class="t" style="top:495.92px;height:21.16px;line-height:21.16px;font-size:16.28px;color:#000088;font-weight:bold;right:444.52px;text-align:right;">10</span>
<div class="b " style="left:20.87px;top:109.57px;width:1875.13px;height:2.09px;background:#262626;"></div>
<div class="b " style="left:20.87px;top:130.54px;width:1875.13px;height:1.98px;background:#262626;"></div>
<svg class="b" style="left:11.69px;top:115.41px;width:6.47px;height:11.90px" viewBox="0 0 5 9"><path d="M0 0 L5 4.5 L0 9 Z" fill="#000"/></svg>
<span class="t" style="top:91.40px;height:18.18px;line-height:18.18px;font-size:13.98px;color:#1c1c1c;left:24.00px;-webkit-text-stroke:0.5px #1c1c1c;">Ord.</span>
<span class="t" style="top:91.40px;height:18.18px;line-height:18.18px;font-size:13.98px;color:#1c1c1c;left:61.57px;-webkit-text-stroke:0.5px #1c1c1c;">M.m.</span>
<span class="t" style="top:91.40px;height:18.18px;line-height:18.18px;font-size:13.98px;color:#1c1c1c;left:101.74px;-webkit-text-stroke:0.5px #1c1c1c;">Conf</span>
<span class="t" style="top:91.40px;height:18.18px;line-height:18.18px;font-size:13.98px;color:#1c1c1c;left:143.48px;-webkit-text-stroke:0.5px #1c1c1c;">Evasi</span>
<span class="t" style="top:91.40px;height:18.18px;line-height:18.18px;font-size:13.98px;color:#1c1c1c;left:183.65px;-webkit-text-stroke:0.5px #1c1c1c;">Manc.</span>
<span class="t" style="top:91.40px;height:18.18px;line-height:18.18px;font-size:13.98px;color:#1c1c1c;left:227.48px;-webkit-text-stroke:0.5px #1c1c1c;">Rinv</span>
<span class="t" style="top:91.40px;height:18.18px;line-height:18.18px;font-size:13.98px;color:#1c1c1c;left:269.22px;-webkit-text-stroke:0.5px #1c1c1c;">Giac.</span>
<span class="t" style="top:91.40px;height:18.18px;line-height:18.18px;font-size:13.98px;color:#1c1c1c;left:310.96px;-webkit-text-stroke:0.5px #1c1c1c;">MinSan</span>
<span class="t" style="top:91.40px;height:18.18px;line-height:18.18px;font-size:13.98px;color:#1c1c1c;left:405.91px;-webkit-text-stroke:0.5px #1c1c1c;">Descrizione</span>
<span class="t" style="top:91.40px;height:18.18px;line-height:18.18px;font-size:13.98px;color:#1c1c1c;left:735.65px;-webkit-text-stroke:0.5px #1c1c1c;">C</span>
<span class="t" style="top:91.40px;height:18.18px;line-height:18.18px;font-size:13.98px;color:#1c1c1c;left:760.17px;-webkit-text-stroke:0.5px #1c1c1c;">N</span>
<span class="t" style="top:91.40px;height:18.18px;line-height:18.18px;font-size:13.98px;color:#1c1c1c;left:781.57px;-webkit-text-stroke:0.5px #1c1c1c;">Costo ev.</span>
<span class="t" style="top:91.40px;height:18.18px;line-height:18.18px;font-size:13.98px;color:#1c1c1c;left:859.83px;-webkit-text-stroke:0.5px #1c1c1c;">T</span>
<span class="t" style="top:91.40px;height:18.18px;line-height:18.18px;font-size:13.98px;color:#1c1c1c;left:882.78px;-webkit-text-stroke:0.5px #1c1c1c;">A</span>
<span class="t" style="top:91.40px;height:18.18px;line-height:18.18px;font-size:13.98px;color:#1c1c1c;left:907.83px;-webkit-text-stroke:0.5px #1c1c1c;">Prezzo</span>
<span class="t" style="top:91.40px;height:18.18px;line-height:18.18px;font-size:13.98px;color:#1c1c1c;left:983.48px;-webkit-text-stroke:0.5px #1c1c1c;">Ev. Robot</span>
<span class="t" style="top:91.40px;height:18.18px;line-height:18.18px;font-size:13.98px;color:#1c1c1c;left:1061.74px;-webkit-text-stroke:0.5px #1c1c1c;">A</span>
<span class="t" style="top:91.40px;height:18.18px;line-height:18.18px;font-size:13.98px;color:#1c1c1c;left:1082.61px;-webkit-text-stroke:0.5px #1c1c1c;">Pr...</span>
<span class="t" style="top:91.40px;height:18.18px;line-height:18.18px;font-size:13.98px;color:#1c1c1c;left:1115.48px;-webkit-text-stroke:0.5px #1c1c1c;">Prn.An</span>
<span class="t" style="top:91.40px;height:18.18px;line-height:18.18px;font-size:13.98px;color:#1c1c1c;left:1166.09px;-webkit-text-stroke:0.5px #1c1c1c;">Prz. Storico</span>
<span class="t" style="top:91.40px;height:18.18px;line-height:18.18px;font-size:13.98px;color:#1c1c1c;left:1246.96px;-webkit-text-stroke:0.5px #1c1c1c;">Data Prz. Stor.</span>
<span class="t" style="top:91.40px;height:18.18px;line-height:18.18px;font-size:13.98px;color:#1c1c1c;left:1343.48px;-webkit-text-stroke:0.5px #1c1c1c;">Nuovo Prezzo</span>
<span class="t" style="top:91.40px;height:18.18px;line-height:18.18px;font-size:13.98px;color:#1c1c1c;left:1436.87px;-webkit-text-stroke:0.5px #1c1c1c;">IVA</span>
<span class="t" style="top:91.40px;height:18.18px;line-height:18.18px;font-size:13.98px;color:#1c1c1c;left:1481.74px;-webkit-text-stroke:0.5px #1c1c1c;">Data Lotto</span>
<span class="t" style="top:91.40px;height:18.18px;line-height:18.18px;font-size:13.98px;color:#1c1c1c;left:1631.48px;-webkit-text-stroke:0.5px #1c1c1c;">Sos.</span>
<span class="t" style="top:91.40px;height:18.18px;line-height:18.18px;font-size:13.98px;color:#1c1c1c;left:1671.13px;-webkit-text-stroke:0.5px #1c1c1c;">Mins.Sost.</span>
<span class="t" style="top:91.40px;height:18.18px;line-height:18.18px;font-size:13.98px;color:#1c1c1c;left:1856.35px;-webkit-text-stroke:0.5px #1c1c1c;">Scad.</span>
<div class="b " style="left:10.02px;top:95.17px;width:7.51px;height:7.93px;background:#fff;box-shadow:inset 0 0 0 1px #9a9a9a;"></div>
<div class="b " style="left:11.69px;top:98.71px;width:4.17px;height:0.83px;background:#888;"></div>
<div class="b " style="left:13.36px;top:97.04px;width:0.83px;height:4.17px;background:#888;"></div>
<div class="b " style="left:20.35px;top:90.78px;width:1.04px;height:18.78px;background:rgba(0,0,0,0.08);"></div>
<div class="b " style="left:57.91px;top:90.78px;width:1.04px;height:18.78px;background:rgba(0,0,0,0.08);"></div>
<div class="b " style="left:98.61px;top:90.78px;width:1.04px;height:18.78px;background:rgba(0,0,0,0.08);"></div>
<div class="b " style="left:139.93px;top:90.78px;width:1.04px;height:18.78px;background:rgba(0,0,0,0.08);"></div>
<div class="b " style="left:179.37px;top:90.78px;width:1.04px;height:18.78px;background:rgba(0,0,0,0.08);"></div>
<div class="b " style="left:223.83px;top:90.78px;width:1.04px;height:18.78px;background:rgba(0,0,0,0.08);"></div>
<div class="b " style="left:264.52px;top:90.78px;width:1.04px;height:18.78px;background:rgba(0,0,0,0.08);"></div>
<div class="b " style="left:306.26px;top:90.78px;width:1.04px;height:18.78px;background:rgba(0,0,0,0.08);"></div>
<div class="b " style="left:400.17px;top:90.78px;width:1.04px;height:18.78px;background:rgba(0,0,0,0.08);"></div>
<div class="b " style="left:728.87px;top:90.78px;width:1.04px;height:18.78px;background:rgba(0,0,0,0.08);"></div>
<div class="b " style="left:752.87px;top:90.78px;width:1.04px;height:18.78px;background:rgba(0,0,0,0.08);"></div>
<div class="b " style="left:775.83px;top:90.78px;width:1.04px;height:18.78px;background:rgba(0,0,0,0.08);"></div>
<div class="b " style="left:856.17px;top:90.78px;width:1.04px;height:18.78px;background:rgba(0,0,0,0.08);"></div>
<div class="b " style="left:876.00px;top:90.78px;width:1.04px;height:18.78px;background:rgba(0,0,0,0.08);"></div>
<div class="b " style="left:903.13px;top:90.78px;width:1.04px;height:18.78px;background:rgba(0,0,0,0.08);"></div>
<div class="b " style="left:980.35px;top:90.78px;width:1.04px;height:18.78px;background:rgba(0,0,0,0.08);"></div>
<div class="b " style="left:1056.10px;top:90.78px;width:1.04px;height:18.78px;background:rgba(0,0,0,0.08);"></div>
<div class="b " style="left:1077.39px;top:90.78px;width:1.04px;height:18.78px;background:rgba(0,0,0,0.08);"></div>
<div class="b " style="left:1110.78px;top:90.78px;width:1.04px;height:18.78px;background:rgba(0,0,0,0.08);"></div>
<div class="b " style="left:1161.91px;top:90.78px;width:1.04px;height:18.78px;background:rgba(0,0,0,0.08);"></div>
<div class="b " style="left:1243.30px;top:90.78px;width:1.04px;height:18.78px;background:rgba(0,0,0,0.08);"></div>
<div class="b " style="left:1342.43px;top:90.78px;width:1.04px;height:18.78px;background:rgba(0,0,0,0.08);"></div>
<div class="b " style="left:1435.30px;top:90.78px;width:1.04px;height:18.78px;background:rgba(0,0,0,0.08);"></div>
<div class="b " style="left:1477.04px;top:90.78px;width:1.04px;height:18.78px;background:rgba(0,0,0,0.08);"></div>
<div class="b " style="left:1627.30px;top:90.78px;width:1.04px;height:18.78px;background:rgba(0,0,0,0.08);"></div>
<div class="b " style="left:1667.58px;top:90.78px;width:1.04px;height:18.78px;background:rgba(0,0,0,0.08);"></div>
<div class="b " style="left:1852.70px;top:90.78px;width:1.04px;height:18.78px;background:rgba(0,0,0,0.08);"></div>
<div class="b " style="left:1896.63px;top:89.74px;width:17.95px;height:448.70px;background:#f0f0f0;"></div>
<div class="b " style="left:1897.88px;top:304.70px;width:13.57px;height:16.28px;background:#cdcdcd;"></div>
<svg class="b" style="left:1900.59px;top:95.58px;width:7.93px;height:5.01px" viewBox="0 0 8 5"><path d="M0.8 4.2 L4 1 L7.2 4.2" fill="none" stroke="#555" stroke-width="1.3"/></svg>
<svg class="b" style="left:1900.59px;top:526.54px;width:7.93px;height:5.01px" viewBox="0 0 8 5"><path d="M0.8 0.8 L4 4 L7.2 0.8" fill="none" stroke="#555" stroke-width="1.3"/></svg>
<div class="b " style="left:6.26px;top:538.43px;width:1908.31px;height:16.70px;background:#f0f0f0;"></div>
<div class="b " style="left:23.58px;top:540.52px;width:19.20px;height:13.15px;background:#cdcdcd;"></div>
<svg class="b" style="left:12.52px;top:542.82px;width:5.01px;height:7.93px" viewBox="0 0 5 8"><path d="M4.2 0.8 L1 4 L4.2 7.2" fill="none" stroke="#555" stroke-width="1.3"/></svg>
<svg class="b" style="left:1884.94px;top:542.82px;width:5.01px;height:7.93px" viewBox="0 0 5 8"><path d="M0.8 0.8 L4 4 L0.8 7.2" fill="none" stroke="#555" stroke-width="1.3"/></svg>
<div class="b " style="left:5.22px;top:554.92px;width:1910.61px;height:28.17px;background:#f0f0f0;box-shadow:inset 0 0 0 1.6px #bcbcbc;"></div>
<span class="t" style="top:559.10px;height:24.42px;line-height:24.42px;font-size:18.78px;color:#1a1a1a;letter-spacing:0.01px;left:721.57px;">i dati sottostanti sono riferiti all'ultimo prodotto manipolato</span>
<span class="t" style="top:592.42px;height:24.96px;line-height:24.96px;font-size:19.20px;color:#111;font-weight:bold;letter-spacing:-0.19px;right:1757.41px;text-align:right;">Ult. Prodotto:</span>
<div class="b " style="left:165.91px;top:589.57px;width:398.61px;height:28.17px;background:#fff;box-shadow:inset 0 0 0 1px #ececec;"></div>
<span class="t" style="top:592.42px;height:24.96px;line-height:24.96px;font-size:19.20px;color:#111;font-weight:bold;right:1322.61px;text-align:right;">Pz:</span>
<div class="b " style="left:601.04px;top:589.57px;width:67.83px;height:28.17px;background:#fff;box-shadow:inset 0 0 0 1px #ececec;"></div>
<span class="t" style="top:592.11px;height:24.96px;line-height:24.96px;font-size:19.20px;color:#111;font-weight:bold;right:1254.47px;text-align:right;">0</span>
<span class="t" style="top:592.42px;height:24.96px;line-height:24.96px;font-size:19.20px;color:#111;font-weight:bold;letter-spacing:0.01px;right:1136.34px;text-align:right;">Giacenza:</span>
<div class="b " style="left:790.43px;top:589.57px;width:57.39px;height:28.17px;background:#fff;box-shadow:inset 0 0 0 1px #ececec;"></div>
<span class="t" style="top:592.11px;height:24.96px;line-height:24.96px;font-size:19.20px;color:#111;font-weight:bold;right:1075.51px;text-align:right;">0</span>
<div class="b " style="left:851.48px;top:589.57px;width:58.96px;height:28.17px;background:#fff;box-shadow:inset 0 0 0 1px #ececec;"></div>
<span class="t" style="top:592.11px;height:24.96px;line-height:24.96px;font-size:19.20px;color:#111;font-weight:bold;right:1012.90px;text-align:right;">0</span>
<span class="t" style="top:592.42px;height:24.96px;line-height:24.96px;font-size:19.20px;color:#111;font-weight:bold;letter-spacing:-0.09px;right:907.92px;text-align:right;">Prenotati :</span>
<span class="t" style="top:592.42px;height:24.96px;line-height:24.96px;font-size:19.20px;color:#111;font-weight:bold;letter-spacing:-0.19px;right:803.67px;text-align:right;">a Cliente:</span>
<div class="b " style="left:1122.78px;top:589.57px;width:58.96px;height:28.17px;background:#fff;box-shadow:inset 0 0 0 1px #ececec;"></div>
<span class="t" style="top:592.11px;height:24.96px;line-height:24.96px;font-size:19.20px;color:#111;font-weight:bold;right:741.60px;text-align:right;">0</span>
<span class="t" style="top:592.42px;height:24.96px;line-height:24.96px;font-size:19.20px;color:#111;font-weight:bold;letter-spacing:-0.49px;right:642.22px;text-align:right;">Anonimi:</span>
<div class="b " style="left:1285.04px;top:589.57px;width:55.83px;height:28.17px;background:#fff;box-shadow:inset 0 0 0 1px #ececec;"></div>
<span class="t" style="top:592.11px;height:24.96px;line-height:24.96px;font-size:19.20px;color:#111;font-weight:bold;right:582.47px;text-align:right;">0</span>
<span class="t" style="top:630.41px;height:24.96px;line-height:24.96px;font-size:19.20px;color:#111;font-weight:bold;letter-spacing:0.11px;right:1757.11px;text-align:right;">Temperatura:</span>
<div class="b " style="left:165.91px;top:627.34px;width:398.61px;height:28.17px;background:#fff;box-shadow:inset 0 0 0 1px #ececec;"></div>
<span class="t" style="top:630.41px;height:24.96px;line-height:24.96px;font-size:19.20px;color:#111;font-weight:bold;letter-spacing:-0.06px;right:1275.72px;text-align:right;">Prezzo:</span>
<div class="b " style="left:651.13px;top:627.34px;width:97.57px;height:28.17px;background:#fff;box-shadow:inset 0 0 0 1px #ececec;"></div>
<span class="t" style="top:629.89px;height:24.96px;line-height:24.96px;font-size:19.20px;color:#111;font-weight:bold;right:1174.64px;text-align:right;">0,00</span>
<span class="t" style="top:630.41px;height:24.96px;line-height:24.96px;font-size:19.20px;color:#111;font-weight:bold;right:1134.78px;text-align:right;">BD:</span>
<div class="b " style="left:790.43px;top:627.34px;width:102.78px;height:28.17px;background:#fff;box-shadow:inset 0 0 0 1px #ececec;"></div>
<span class="t" style="top:629.89px;height:24.96px;line-height:24.96px;font-size:19.20px;color:#111;font-weight:bold;right:1030.12px;text-align:right;">0,00</span>
<span class="t" style="top:630.41px;height:24.96px;line-height:24.96px;font-size:19.20px;color:#111;font-weight:bold;letter-spacing:-0.34px;right:921.21px;text-align:right;">Ult.Prezzo:</span>
<div class="b " style="left:1005.91px;top:627.34px;width:102.78px;height:28.17px;background:#fff;box-shadow:inset 0 0 0 1px #ececec;"></div>
<span class="t" style="top:629.89px;height:24.96px;line-height:24.96px;font-size:19.20px;color:#111;font-weight:bold;right:814.64px;text-align:right;">0,00</span>
<span class="t" style="top:630.41px;height:24.96px;line-height:24.96px;font-size:19.20px;color:#111;font-weight:bold;letter-spacing:-0.13px;right:641.87px;text-align:right;">Data ult. prezzo:</span>
<div class="b " style="left:1285.04px;top:627.34px;width:101.22px;height:28.17px;background:#fff;box-shadow:inset 0 0 0 1px #ececec;"></div>
<span class="t" style="top:668.81px;height:24.96px;line-height:24.96px;font-size:19.20px;color:#111;font-weight:bold;letter-spacing:-0.07px;right:1757.29px;text-align:right;">Ubicazione:</span>
<div class="b " style="left:165.91px;top:665.53px;width:219.13px;height:28.38px;background:#fff;box-shadow:inset 0 0 0 1px #ececec;"></div>
<span class="t" style="top:668.81px;height:24.96px;line-height:24.96px;font-size:19.20px;color:#111;font-weight:bold;letter-spacing:0.02px;right:1356.50px;text-align:right;">Ubicazione Banco:</span>
<div class="b " style="left:567.65px;top:665.53px;width:226.96px;height:28.38px;background:#fff;box-shadow:inset 0 0 0 1px #ececec;"></div>
<span class="t" style="top:668.81px;height:24.96px;line-height:24.96px;font-size:19.20px;color:#111;font-weight:bold;letter-spacing:-0.15px;right:921.02px;text-align:right;">Prezzo imposto:</span>
<div class="b " style="left:1005.91px;top:665.53px;width:102.78px;height:28.38px;background:#fff;box-shadow:inset 0 0 0 1px #ececec;"></div>
<span class="t" style="top:668.18px;height:24.96px;line-height:24.96px;font-size:19.20px;color:#111;font-weight:bold;right:814.64px;text-align:right;">0,00</span>
<span class="t" style="top:668.81px;height:24.96px;line-height:24.96px;font-size:19.20px;color:#111;font-weight:bold;letter-spacing:-0.11px;right:641.85px;text-align:right;">Prezzo praticato:</span>
<div class="b " style="left:1285.04px;top:665.53px;width:101.22px;height:28.38px;background:#fff;box-shadow:inset 0 0 0 1px #ececec;"></div>
<span class="t" style="top:668.18px;height:24.96px;line-height:24.96px;font-size:19.20px;color:#111;font-weight:bold;right:537.08px;text-align:right;">0,00</span>
<span class="t" style="top:706.58px;height:24.96px;line-height:24.96px;font-size:19.20px;color:#111;font-weight:bold;letter-spacing:-0.03px;right:1757.25px;text-align:right;">Tipo Prodotto:</span>
<div class="b " style="left:165.91px;top:704.77px;width:628.70px;height:27.97px;background:#fff;box-shadow:inset 0 0 0 1px #ececec;"></div>
<span class="t" style="top:706.58px;height:24.96px;line-height:24.96px;font-size:19.20px;color:#111;font-weight:bold;letter-spacing:-0.33px;right:920.15px;text-align:right;">Tipo Ricetta:</span>
<div class="b " style="left:1005.91px;top:704.77px;width:380.35px;height:27.97px;background:#eeeeee;box-shadow:inset 0 0 0 1.2px #e2e2e2;"></div>
<span class="t" style="top:746.65px;height:24.96px;line-height:24.96px;font-size:19.20px;color:#111;font-weight:bold;letter-spacing:0.00px;right:1757.22px;text-align:right;">Comunicazioni:</span>
<div class="b " style="left:165.91px;top:744.42px;width:628.70px;height:28.80px;background:#fff;box-shadow:inset 0 0 0 1px #ececec;"></div>
<span class="t" style="top:790.69px;height:24.96px;line-height:24.96px;font-size:19.20px;color:#111;font-weight:bold;letter-spacing:0.06px;right:1676.29px;text-align:right;">Scadenza ultimo carico:</span>
<div class="b " style="left:249.91px;top:787.62px;width:103.62px;height:28.59px;background:#fff;box-shadow:inset 0 0 0 1px #ececec;"></div>
<div class="b " style="left:361.25px;top:783.23px;width:134.40px;height:41.53px;background:#e1e1e1;box-shadow:inset 0 0 0 1.2px #b8b8b8;"></div>
<span class="t" style="top:793.46px;height:24.42px;line-height:24.42px;font-size:18.78px;color:#111;left:11.27px;width:834.78px;text-align:center;">Ins. Scadenza</span>
<span class="t" style="top:790.89px;height:24.96px;line-height:24.96px;font-size:19.20px;color:#111;font-weight:bold;letter-spacing:0.03px;right:1155.63px;text-align:right;">Prelevati dalla vendita:</span>
<div class="b " style="left:769.57px;top:787.62px;width:76.70px;height:28.59px;background:#eeeeee;box-shadow:inset 0 0 0 1.2px #e2e2e2;"></div>
<span class="t" style="top:790.37px;height:24.96px;line-height:24.96px;font-size:19.20px;color:#111;font-weight:bold;right:1077.08px;text-align:right;">0</span>
<span class="t" style="top:790.89px;height:24.96px;line-height:24.96px;font-size:19.20px;color:#111;font-weight:bold;letter-spacing:0.00px;right:898.95px;text-align:right;">Caricati nel robot:</span>
<div class="b " style="left:1026.26px;top:787.62px;width:76.17px;height:28.59px;background:#eeeeee;box-shadow:inset 0 0 0 1.2px #e2e2e2;"></div>
<span class="t" style="top:790.37px;height:24.96px;line-height:24.96px;font-size:19.20px;color:#111;font-weight:bold;right:820.90px;text-align:right;">0</span>
<div class="b " style="left:0.00px;top:828.31px;width:1912.28px;height:1.88px;background:#b2b2b2;"></div>
<div class="b " style="left:0.00px;top:830.19px;width:1913.74px;height:1.67px;background:#fafafa;"></div>
<div class="b " style="left:1914.16px;top:830.61px;width:1.67px;height:121.04px;background:#c8c8c8;"></div>
<div class="b " style="left:9.91px;top:833.32px;width:41.63px;height:36.52px;background:#fff;box-shadow:inset 0 0 0 1.3px #707070;"></div>
<svg class="b" style="left:15.86px;top:841.04px;width:27.97px;height:22.12px" viewBox="0 0 20 16"><path d="M1.5 8 H16 M10 2.5 L16.5 8 L10 13.5" fill="none" stroke="#e8101c" stroke-width="3.6" stroke-linecap="round" stroke-linejoin="round"/></svg>
<div class="b " style="left:54.78px;top:836.03px;width:370.43px;height:28.80px;background:#fff;box-shadow:inset 0 0 0 1.2px #a6a6a6;"></div>
<span class="t" style="top:840.56px;height:24.96px;line-height:24.96px;font-size:19.20px;color:#111;font-weight:bold;right:1324.17px;text-align:right;">Pz.</span>
<div class="b " style="left:601.04px;top:836.03px;width:65.22px;height:28.80px;background:#eeeeee;box-shadow:inset 0 0 0 1.2px #e2e2e2;"></div>
<span class="t" style="top:838.89px;height:24.96px;line-height:24.96px;font-size:19.20px;color:#111;font-weight:bold;right:1257.08px;text-align:right;">1</span>
<span class="t" style="top:840.56px;height:24.96px;line-height:24.96px;font-size:19.20px;color:#111;font-weight:bold;letter-spacing:-0.01px;right:1121.75px;text-align:right;">Evaso: Pezzi:</span>
<div class="b " style="left:802.43px;top:836.03px;width:74.09px;height:28.80px;background:#eeeeee;box-shadow:inset 0 0 0 1.2px #e2e2e2;"></div>
<span class="t" style="top:838.89px;height:24.96px;line-height:24.96px;font-size:19.20px;color:#111;font-weight:bold;right:1046.82px;text-align:right;">0</span>
<span class="t" style="top:840.56px;height:24.96px;line-height:24.96px;font-size:19.20px;color:#111;font-weight:bold;letter-spacing:0.12px;right:916.57px;text-align:right;">Valore lordo:</span>
<div class="b " style="left:1005.91px;top:836.03px;width:93.39px;height:28.80px;background:#eeeeee;box-shadow:inset 0 0 0 1.2px #e2e2e2;"></div>
<span class="t" style="top:838.89px;height:24.96px;line-height:24.96px;font-size:19.20px;color:#111;font-weight:bold;right:824.03px;text-align:right;">0,00</span>
<span class="t" style="top:842.02px;height:24.96px;line-height:24.96px;font-size:19.20px;color:#111;font-weight:bold;letter-spacing:-0.21px;right:717.60px;text-align:right;">Costo N/L:</span>
<div class="b " style="left:1207.83px;top:836.03px;width:88.70px;height:28.80px;background:#eeeeee;box-shadow:inset 0 0 0 1.2px #e2e2e2;"></div>
<span class="t" style="top:838.89px;height:24.96px;line-height:24.96px;font-size:19.20px;color:#111;font-weight:bold;right:626.82px;text-align:right;">0,00</span>
<div class="b " style="left:1296.52px;top:836.03px;width:89.84px;height:28.80px;background:#eeeeee;box-shadow:inset 0 0 0 1.2px #e2e2e2;"></div>
<span class="t" style="top:838.89px;height:24.96px;line-height:24.96px;font-size:19.20px;color:#111;font-weight:bold;right:536.97px;text-align:right;">0,00</span>
<div class="b " style="left:69.39px;top:880.28px;width:1780.28px;height:67.83px;background:#fff;box-shadow:inset 0 0 0 1.2px #b4b4b4;"></div>
<div class="b " style="left:69.39px;top:880.28px;width:1780.28px;height:1.46px;background:#8a8a8a;"></div>
<div class="b " style="left:69.39px;top:880.28px;width:1.36px;height:67.83px;background:#8a8a8a;"></div>
<span class="t" style="top:884.80px;height:24.55px;line-height:24.55px;font-size:18.89px;color:#1c1c8c;letter-spacing:0.02px;left:75.97px;">Elenco prodotti dell'ordine selezionato.</span>
<span class="t" style="top:907.97px;height:24.55px;line-height:24.55px;font-size:18.89px;color:#1c1c8c;letter-spacing:-0.02px;left:75.97px;">Per inserire la scadenza del prodotto premere il tasto Ins. (indicatore rosso a sinistra di Prodotto) per annullare tasto Canc.</span>
<svg class="b" style="left:8.35px;top:899.06px;width:30.47px;height:30.47px" viewBox="0 0 30 30"><defs><radialGradient id="ig" cx="0.4" cy="0.3" r="0.8"><stop offset="0" stop-color="#7fb0ff"/><stop offset="0.5" stop-color="#2f64d8"/><stop offset="1" stop-color="#123a9c"/></radialGradient></defs><circle cx="15" cy="15" r="14" fill="url(#ig)" stroke="#1d3f8f" stroke-width="1"/><circle cx="15" cy="8" r="2.4" fill="#fff"/><rect x="12.6" y="12" width="4.8" height="11.5" rx="1" fill="#fff"/></svg>
<svg class="b" style="left:1853.43px;top:905.32px;width:31.30px;height:16.28px" viewBox="0 0 30 16"><rect x="0" y="0" width="30" height="16" rx="1.5" fill="#6a82b2"/><g fill="#d6e0f4"><rect x="3" y="3" width="4" height="3"/><rect x="9" y="3" width="4" height="3"/><rect x="15" y="3" width="4" height="3"/><rect x="21" y="3" width="5" height="3"/><rect x="3" y="8" width="4" height="3"/><rect x="9" y="8" width="4" height="3"/><rect x="15" y="8" width="4" height="3"/><rect x="21" y="8" width="5" height="3"/></g></svg>
<div class="b " style="left:0.00px;top:949.98px;width:1920.00px;height:2.09px;background:#c6c6c6;"></div>
<div class="b " style="left:0.00px;top:955.83px;width:1920.00px;height:83.48px;background:#e3e3e3;"></div>
<div class="b " style="left:0.00px;top:956.24px;width:319.72px;height:41.11px;background:#e3e3e3;box-shadow:inset 1.2px 1.2px 0 #fafafa, inset -1.2px -1.2px 0 #a8a8a8;"></div>
<svg class="b" style="left:308.66px;top:959.79px;width:8.56px;height:8.56px" viewBox="0 0 10 10"><path d="M0 0 H10 V10 Z" fill="#14147c"/></svg>
<div class="b " style="left:319.72px;top:956.24px;width:319.10px;height:41.11px;background:#e3e3e3;box-shadow:inset 1.2px 1.2px 0 #fafafa, inset -1.2px -1.2px 0 #a8a8a8;"></div>
<div class="b " style="left:638.82px;top:956.24px;width:319.10px;height:41.11px;background:#e3e3e3;box-shadow:inset 1.2px 1.2px 0 #fafafa, inset -1.2px -1.2px 0 #a8a8a8;"></div>
<div class="b " style="left:957.91px;top:956.24px;width:319.10px;height:41.11px;background:#e3e3e3;box-shadow:inset 1.2px 1.2px 0 #fafafa, inset -1.2px -1.2px 0 #a8a8a8;"></div>
<div class="b " style="left:1277.01px;top:956.24px;width:318.89px;height:41.11px;background:#e3e3e3;box-shadow:inset 1.2px 1.2px 0 #fafafa, inset -1.2px -1.2px 0 #a8a8a8;"></div>
<svg class="b" style="left:1584.83px;top:959.79px;width:8.56px;height:8.56px" viewBox="0 0 10 10"><path d="M0 0 H10 V10 Z" fill="#14147c"/></svg>
<div class="b " style="left:1595.90px;top:956.24px;width:324.10px;height:41.11px;background:#e3e3e3;box-shadow:inset 1.2px 1.2px 0 #fafafa, inset -1.2px -1.2px 0 #a8a8a8;"></div>
<div class="b " style="left:0.00px;top:997.36px;width:319.72px;height:41.53px;background:#e3e3e3;box-shadow:inset 1.2px 1.2px 0 #fafafa, inset -1.2px -1.2px 0 #a8a8a8;"></div>
<svg class="b" style="left:308.66px;top:1000.90px;width:8.56px;height:8.56px" viewBox="0 0 10 10"><path d="M0 0 H10 V10 Z" fill="#14147c"/></svg>
<div class="b " style="left:319.72px;top:997.36px;width:319.10px;height:41.53px;background:#e3e3e3;box-shadow:inset 1.2px 1.2px 0 #fafafa, inset -1.2px -1.2px 0 #a8a8a8;"></div>
<svg class="b" style="left:627.76px;top:1000.90px;width:8.56px;height:8.56px" viewBox="0 0 10 10"><path d="M0 0 H10 V10 Z" fill="#14147c"/></svg>
<div class="b " style="left:638.82px;top:997.36px;width:319.10px;height:41.53px;background:#e3e3e3;box-shadow:inset 1.2px 1.2px 0 #fafafa, inset -1.2px -1.2px 0 #a8a8a8;"></div>
<div class="b " style="left:957.91px;top:997.36px;width:319.10px;height:41.53px;background:#e3e3e3;box-shadow:inset 1.2px 1.2px 0 #fafafa, inset -1.2px -1.2px 0 #a8a8a8;"></div>
<div class="b " style="left:1277.01px;top:997.36px;width:318.89px;height:41.53px;background:#e3e3e3;box-shadow:inset 1.2px 1.2px 0 #fafafa, inset -1.2px -1.2px 0 #a8a8a8;"></div>
<svg class="b" style="left:1584.83px;top:1000.90px;width:8.56px;height:8.56px" viewBox="0 0 10 10"><path d="M0 0 H10 V10 Z" fill="#14147c"/></svg>
<div class="b " style="left:1595.90px;top:997.36px;width:324.10px;height:41.53px;background:#e3e3e3;box-shadow:inset 1.2px 1.2px 0 #fafafa, inset -1.2px -1.2px 0 #a8a8a8;"></div>
<span class="t" style="top:965.78px;height:24.96px;line-height:24.96px;font-size:19.20px;color:#14147c;font-weight:bold;letter-spacing:-0.07px;left:83.48px;">F1 Altre Evasioni</span>
<span class="t" style="top:965.78px;height:24.96px;line-height:24.96px;font-size:19.20px;color:#14147c;font-weight:bold;letter-spacing:0.05px;left:380.87px;">F2 Carico con Lettore</span>
<span class="t" style="top:965.78px;height:24.96px;line-height:24.96px;font-size:19.20px;color:#14147c;font-weight:bold;letter-spacing:0.07px;left:704.77px;">F3 Chiede Scadenza</span>
<span class="t" style="top:965.78px;height:24.96px;line-height:24.96px;font-size:19.20px;color:#14147c;font-weight:bold;letter-spacing:0.04px;left:1016.97px;">F4 Inserisci Scadenza</span>
<span class="t" style="top:965.78px;height:24.96px;line-height:24.96px;font-size:19.20px;color:#14147c;font-weight:bold;letter-spacing:-0.33px;left:1376.77px;">F5 Altri Rinvii</span>
<span class="t" style="top:965.78px;height:24.96px;line-height:24.96px;font-size:19.20px;color:#14147c;font-weight:bold;letter-spacing:0.16px;left:1665.39px;">F6 Manc.a Proposta</span>
<span class="t" style="top:1008.98px;height:24.96px;line-height:24.96px;font-size:19.20px;color:#14147c;font-weight:bold;letter-spacing:-0.10px;left:128.77px;">F7 Stampa</span>
<span class="t" style="top:1008.98px;height:24.96px;line-height:24.96px;font-size:19.20px;color:#14147c;font-weight:bold;letter-spacing:-0.11px;left:444.31px;">F8 Altro</span>
<span class="t" style="top:1008.98px;height:24.96px;line-height:24.96px;font-size:19.20px;color:#14147c;font-weight:bold;letter-spacing:-0.16px;left:751.30px;">F9 Rinviati</span>
<span class="t" style="top:1008.98px;height:24.96px;line-height:24.96px;font-size:19.20px;color:#14147c;font-weight:bold;letter-spacing:0.06px;left:1052.45px;">F10 Conferma</span>
<span class="t" style="top:1008.98px;height:24.96px;line-height:24.96px;font-size:19.20px;color:#14147c;font-weight:bold;letter-spacing:-0.30px;left:1414.96px;">F11 Help</span>
<span class="t" style="top:1008.98px;height:24.96px;line-height:24.96px;font-size:19.20px;color:#14147c;font-weight:bold;letter-spacing:0.10px;left:1734.89px;">F12 Esci</span>
<svg class="b" style="left:96.00px;top:1002.16px;width:29.22px;height:32.35px" viewBox="0 0 28 31"><defs><linearGradient id="pg" x1="0" y1="0" x2="0" y2="1"><stop offset="0" stop-color="#cfe2f4"/><stop offset="1" stop-color="#ffffff"/></linearGradient></defs><rect x="1" y="10.5" width="26" height="14.5" rx="1.5" fill="#e4e6ea" stroke="#8d949e" stroke-width="1"/><rect x="5.2" y="0.8" width="17.6" height="11" fill="url(#pg)" stroke="#8fa3ba" stroke-width="1"/><rect x="5" y="12.2" width="18" height="8.6" fill="#6c747e"/><rect x="5" y="15.4" width="18" height="1.6" fill="#aab2bc"/><rect x="5.2" y="22.6" width="17.6" height="7.4" fill="url(#pg)" stroke="#7f90a4" stroke-width="1"/><rect x="5" y="29" width="18" height="1.6" fill="#56657a"/></svg>
<svg class="b" style="left:1384.07px;top:1002.99px;width:27.13px;height:30.05px" viewBox="0 0 26 29"><path d="M13 0.8 L25.2 14.5 L13 28.2 L0.8 14.5 Z" fill="#dfe9f5" stroke="#9db4cf" stroke-width="0.8"/><path d="M13 3.6 L22.6 14.5 L13 25.4 L3.4 14.5 Z" fill="#5d90c6" stroke="#3f6fa6" stroke-width="1"/><circle cx="13" cy="9.6" r="1.9" fill="#c9e8ff"/><rect x="11.3" y="12.6" width="3.4" height="8.2" rx="0.8" fill="#c9e8ff"/></svg>
<svg class="b" style="left:1702.54px;top:1002.16px;width:29.84px;height:32.56px" viewBox="0 0 29 32"><defs><linearGradient id="eg" x1="0" y1="0" x2="1" y2="0"><stop offset="0" stop-color="#2fb6d2"/><stop offset="1" stop-color="#a6e8f2"/></linearGradient></defs><path d="M1 0.8 H17 V7 H14.5 V5 H7.5 V27 H14.5 V25 H17 V31.2 H1 Z" fill="url(#eg)"/><rect x="7.5" y="5" width="7" height="22" fill="#f2fbfd"/><path d="M11.5 12.6 H19.5 V8.6 L28.4 16 L19.5 23.4 V19.4 H11.5 Z" fill="#33b2e6"/></svg>
</div></body></html>
